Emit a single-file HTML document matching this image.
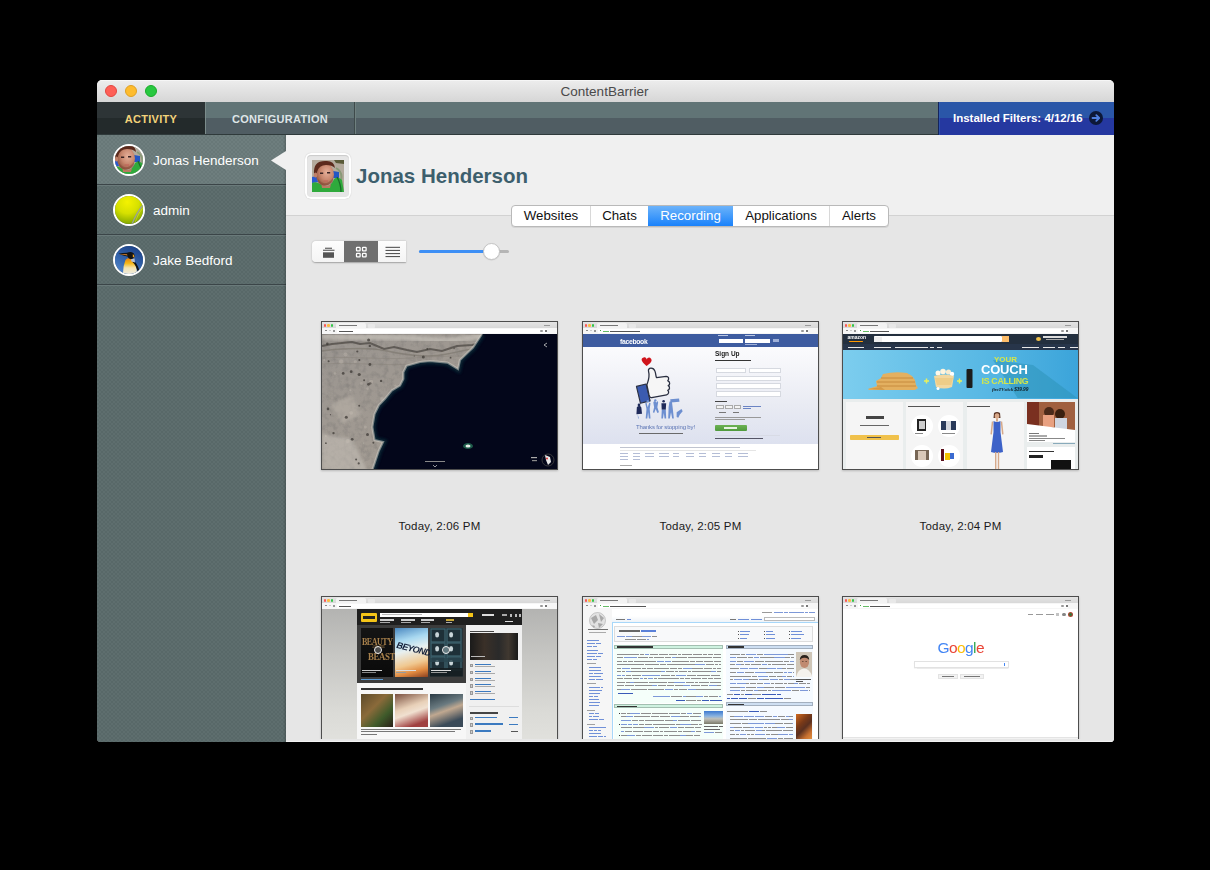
<!DOCTYPE html>
<html><head><meta charset="utf-8">
<style>
*{margin:0;padding:0;box-sizing:border-box}
html,body{width:1210px;height:870px;background:#000;overflow:hidden;font-family:"Liberation Sans",sans-serif}
.abs{position:absolute}
#win{position:absolute;left:97px;top:80px;width:1017px;height:662px;border-radius:5px 5px 4px 4px;overflow:hidden;background:#e6e6e6}
#title{position:absolute;left:0;top:0;width:1017px;height:22px;background:linear-gradient(#ececec,#d6d6d6);border-top:1px solid #f6f6f6}
#title .t{position:absolute;left:-1px;width:1017px;top:3px;text-align:center;font-size:13.5px;color:#4a4a4a}
.tl{position:absolute;top:4px;width:12px;height:12px;border-radius:50%}
#tabs{position:absolute;left:0;top:22px;width:1017px;height:33px;background:linear-gradient(#617476 0,#617476 16px,#505d63 16px,#505d63 32px,#2f3a3b 32px)}
.tab{position:absolute;top:0;height:32px;font-size:11px;font-weight:bold;text-align:center;line-height:35px;letter-spacing:0.3px}
#side{position:absolute;left:0;top:55px;width:189px;height:607px;background-color:#5b6b6b;
 background-image:conic-gradient(#5e6e6e 25%,#586868 0 50%,#5e6e6e 0 75%,#586868 0);background-size:4px 4px}
#side .shadow{position:absolute;right:0;top:0;width:3px;height:607px;background:linear-gradient(90deg,rgba(0,0,0,0),rgba(0,0,0,.18))}
.row{position:absolute;left:0;width:189px;height:50px;border-bottom:1px solid #3b4548;box-shadow:0 1px 0 #6a7a7a}
.row .nm{position:absolute;left:56px;top:18px;font-size:13.5px;color:#fff}
.av{position:absolute;left:16px;top:9px;width:32px;height:32px;border-radius:50%;border:2px solid #fff;overflow:hidden}
.av svg{margin:-2px}
#content{position:absolute;left:189px;top:55px;width:828px;height:607px;background:#e6e6e6;overflow:hidden}
#hdr{position:absolute;left:0;top:0;width:828px;height:81px;background:#f0f0f0;border-bottom:1px solid #d2d2d2}
.seg{position:absolute;top:70px;height:21.5px;background:#fff;border:1px solid #b9b9b9;border-radius:4px;display:flex;font-size:13.3px;color:#111;box-shadow:0 1px 0 rgba(0,0,0,.08)}
.seg div{height:19.5px;line-height:19.5px;text-align:center;border-left:1px solid #d8d8d8}
.seg div:first-child{border-left:none}
.seg .on{background:linear-gradient(#6cb3fa,#1a82fb);color:#fff;border-left:none}

.cap{position:absolute;width:237px;text-align:center;font-size:11.5px;color:#1a1a1a;letter-spacing:0.2px;margin-top:1px}



/*TCSS*/
.a{position:absolute}
.thumb{position:absolute;width:237px;height:149px;border:1px solid #4d4d4d;background:#fff;overflow:hidden;box-shadow:0 1px 2px rgba(0,0,0,.2)}
.chr{position:absolute;left:0;top:0;width:235px;height:11.7px;background:#dcdcdc;border-bottom:.5px solid #bdbdbd}
.chr .ts{position:absolute;left:0;top:0;width:235px;height:6px;background:linear-gradient(#e4e4e4,#d8d8d8)}
.chr .tb{position:absolute;left:14px;top:1px;height:5px;background:#f3f3f3;border-radius:1.5px 1.5px 0 0}
.chr .nt{position:absolute;left:46px;top:2px;width:7px;height:4px;background:#e8e8e8;border-radius:1px}
.chr i{position:absolute;top:2.3px;width:2.4px;height:2.4px;border-radius:50%}
.chr .ab{position:absolute;left:0;top:6px;width:235px;height:5.7px;background:#f6f6f6}
.chr .uf{position:absolute;left:15px;top:6.7px;width:210px;height:4.3px;background:#fff}
.ct{position:absolute;left:0;top:11.7px;width:235px;height:136px;overflow:hidden;filter:blur(.4px)}
/*/TCSS*/</style></head><body>
<div id="win">
  <div id="title">
    <div class="tl" style="left:8px;background:#fe5f57;border:1px solid #e24640"></div>
    <div class="tl" style="left:28px;background:#febc2e;border:1px solid #dfa023"></div>
    <div class="tl" style="left:48px;background:#28c840;border:1px solid #1aab29"></div>
    <div class="t">ContentBarrier</div>
  </div>
  <div id="tabs">
    <div class="tab" style="left:0;width:108px;background:linear-gradient(#2d3436 0,#2d3436 16px,#232a2b 16px);color:#f2d27a">ACTIVITY</div>
    <div class="tab" style="left:108px;width:149px;color:#dfe6e8;border-left:1px solid #7b8c8b">CONFIGURATION</div>
    <div class="abs" style="left:257px;top:0;width:1px;height:32px;background:#3e4a4b"></div>
    <div class="abs" style="left:258px;top:0;width:1px;height:32px;background:#6f807f"></div>
    <div class="abs" style="left:841px;top:0;width:176px;height:33px;background:linear-gradient(#2a56a8 0,#2a56a8 16px,#2538a0 16px)">
      <div class="abs" style="left:0;top:0;width:1px;height:33px;background:#14245c"></div><div class="abs" style="left:1px;top:0;width:1px;height:33px;background:#3560b0;opacity:.6"></div>
      <div class="abs" style="left:15px;top:10px;font-size:11.5px;font-weight:bold;color:#fff;white-space:nowrap">Installed Filters: 4/12/16</div>
      <div class="abs" style="left:151px;top:9px;width:14px;height:14px;border-radius:50%;background:#0d1838">
        <svg class="abs" style="left:0;top:0" width="14" height="14" viewBox="0 0 14 14"><path d="M3.5 7H10M7.3 4.2L10.2 7L7.3 9.8" stroke="#4f7fe0" stroke-width="1.8" fill="none" stroke-linecap="round" stroke-linejoin="round"/></svg>
      </div>
    </div>
  </div>
  <div id="side">
    <div class="row" style="top:0;background:conic-gradient(#6e7e7e 25%,#687878 0 50%,#6e7e7e 0 75%,#687878 0);background-size:4px 4px">
      <div class="av"><svg width="32" height="32" viewBox="0 0 32 32" style="display:block"><defs><radialGradient id="skina" cx=".6" cy=".4" r=".65"><stop offset="0" stop-color="#e6b09a"/><stop offset=".55" stop-color="#c8876e"/><stop offset="1" stop-color="#94553f"/></radialGradient></defs>
<rect width="32" height="32" fill="#b3aa9c"/><path d="M22 0 L32 0 L32 4 L24 3Z" fill="#5a5a38"/>
<path d="M24 8 Q31 12 29 20" stroke="#8a9a78" stroke-width="2" fill="none"/>
<path d="M21 11 L27 12 L27 18 L21 18Z" fill="#2456c4"/><path d="M0 17 L5 16 L6 22 L0 23Z" fill="#2a5ad0"/>
<path d="M0 32 L0 23 Q4 21 8 24 L14 27 Q20 25 22 19 Q26 16 30 20 L32 32Z" fill="#2faa3c"/>
<path d="M25 17 Q29 24 29 32" stroke="#1a6a28" stroke-width="1.3" fill="none"/>
<path d="M9 22 Q13 29 19 24 L18 28 L10 28Z" fill="#b87a62"/>
<ellipse cx="13" cy="14.5" rx="9" ry="11" fill="url(#skina)"/>
<path d="M2 14 Q1 1 13 1 Q22 0 23 8 Q20 5 14 5 Q7 5 5 12 L4 17Z" fill="#5c2a1c"/>
<ellipse cx="3.5" cy="15" rx="1.8" ry="2.5" fill="#c08068"/>
<path d="M8 13.2 h3.2 M15 12.7 h3.2" stroke="#3a2424" stroke-width="1.4"/>
<path d="M6 19 Q13 28 21 18 L21 22 Q13 29 6 23Z" fill="#7a4030" opacity=".4"/>
<path d="M11.5 21 h4.5" stroke="#c06058" stroke-width="1"/>
</svg></div>
      <div class="nm">Jonas Henderson</div>
    </div>
    <div class="row" style="top:50px">
      <div class="av"><svg width="32" height="32" viewBox="0 0 32 32" style="display:block"><defs><radialGradient id="ball" cx=".45" cy=".25" r=".8"><stop offset="0" stop-color="#f4f200"/><stop offset=".45" stop-color="#d6e000"/><stop offset=".8" stop-color="#8fb000"/><stop offset="1" stop-color="#4a6a00"/></radialGradient></defs>
<rect width="32" height="32" fill="url(#ball)"/><path d="M30 11 Q24 18 19 30" stroke="#9aa0a0" stroke-width="1.2" fill="none"/><path d="M31 12 Q25 19 21 31" stroke="#e8f070" stroke-width=".6" fill="none" opacity=".6"/></svg></div>
      <div class="nm">admin</div>
    </div>
    <div class="row" style="top:100px">
      <div class="av"><svg width="32" height="32" viewBox="0 0 32 32" style="display:block"><defs><linearGradient id="pb" x1=".7" y1="0" x2=".2" y2="1"><stop offset="0" stop-color="#1a3e84"/><stop offset=".55" stop-color="#3566ae"/><stop offset="1" stop-color="#5a8ed2"/></linearGradient><linearGradient id="pc" x1="0" y1="0" x2="0" y2="1"><stop offset="0" stop-color="#e8800c"/><stop offset=".3" stop-color="#f6b818"/><stop offset=".55" stop-color="#f4e4b0"/><stop offset="1" stop-color="#eceef2"/></linearGradient></defs>
<rect width="32" height="32" fill="url(#pb)"/>
<path d="M12.5 16 Q14 13.5 17.5 14 Q21 15 23 22 L24.5 32 L10 32 Q9.5 23 12.5 16Z" fill="url(#pc)"/>
<path d="M20 16.5 Q24.5 19 26.5 27 L24.8 28 Q23 21 19.5 18Z" fill="#121212"/>
<path d="M17.5 14 L21.5 14.5 L22 18.5 L18.5 17.5Z" fill="#b4c0d6"/>
<path d="M5.5 9.8 Q10 9 14 8.8 Q16 7.8 19 8.2 Q22 9 21.5 12.5 Q21 15 18 15.2 Q15.5 15 14.5 12.5 Q10 11.5 5.5 9.8Z" fill="#141414"/>
<path d="M6 10 Q10 10.8 14.5 11.6 L14 10.2 Q10 10 6 10Z" fill="#e0862e"/>
<path d="M19.8 10 Q21.8 11.2 21.4 13.6 L19.8 13Z" fill="#f2a21a"/>
</svg></div>
      <div class="nm">Jake Bedford</div>
    </div>
    <div class="shadow"></div>
    <svg class="abs" style="left:174px;top:16.4px" width="15" height="20" viewBox="0 0 15 20"><path d="M15 0L0 9.5L15 19Z" fill="#f0f0f0"/></svg>
  </div>
  <div id="content">
    <div id="hdr"></div>
    <div class="abs" style="left:19px;top:18px;width:46px;height:46px;border-radius:6px;background:#fff;box-shadow:0 0 1px rgba(0,0,0,.25)"></div>
    <div class="abs" style="left:21px;top:20px;width:42px;height:42px;border-radius:4px;background:#e6e6e6;box-shadow:inset 0 1px 1px rgba(0,0,0,.12)"></div>
    <div class="abs" style="left:26px;top:25px;width:32px;height:32px;overflow:hidden"><svg width="32" height="32" viewBox="0 0 32 32" style="display:block"><defs><radialGradient id="skinb" cx=".6" cy=".4" r=".65"><stop offset="0" stop-color="#e6b09a"/><stop offset=".55" stop-color="#c8876e"/><stop offset="1" stop-color="#94553f"/></radialGradient></defs>
<rect width="32" height="32" fill="#b3aa9c"/><path d="M22 0 L32 0 L32 4 L24 3Z" fill="#5a5a38"/>
<path d="M24 8 Q31 12 29 20" stroke="#8a9a78" stroke-width="2" fill="none"/>
<path d="M21 11 L27 12 L27 18 L21 18Z" fill="#2456c4"/><path d="M0 17 L5 16 L6 22 L0 23Z" fill="#2a5ad0"/>
<path d="M0 32 L0 23 Q4 21 8 24 L14 27 Q20 25 22 19 Q26 16 30 20 L32 32Z" fill="#2faa3c"/>
<path d="M25 17 Q29 24 29 32" stroke="#1a6a28" stroke-width="1.3" fill="none"/>
<path d="M9 22 Q13 29 19 24 L18 28 L10 28Z" fill="#b87a62"/>
<ellipse cx="13" cy="14.5" rx="9" ry="11" fill="url(#skinb)"/>
<path d="M2 14 Q1 1 13 1 Q22 0 23 8 Q20 5 14 5 Q7 5 5 12 L4 17Z" fill="#5c2a1c"/>
<ellipse cx="3.5" cy="15" rx="1.8" ry="2.5" fill="#c08068"/>
<path d="M8 13.2 h3.2 M15 12.7 h3.2" stroke="#3a2424" stroke-width="1.4"/>
<path d="M6 19 Q13 28 21 18 L21 22 Q13 29 6 23Z" fill="#7a4030" opacity=".4"/>
<path d="M11.5 21 h4.5" stroke="#c06058" stroke-width="1"/>
</svg></div>
    <div class="abs" style="left:70px;top:28.5px;font-size:20.5px;font-weight:bold;color:#3d5f6d;white-space:nowrap">Jonas Henderson</div>
    <div class="seg" style="left:225px">
      <div style="width:78px">Websites</div>
      <div style="width:58px">Chats</div>
      <div class="on" style="width:85px">Recording</div>
      <div style="width:96px;border-left:none">Applications</div>
      <div style="width:59px">Alerts</div>
    </div>
    <!-- view buttons -->
    <div class="abs" style="left:26px;top:106px;width:94px;height:21px;background:linear-gradient(#fdfdfd,#f4f4f4);border-radius:4px 0 0 4px;box-shadow:0 .5px 1.5px rgba(0,0,0,.3)"></div>
    <div class="abs" style="left:58px;top:106px;width:34px;height:21px;background:#6f6f6f"></div>
    <svg class="abs" style="left:26px;top:106px" width="94" height="21" viewBox="0 0 94 21">
      <rect x="11" y="11.3" width="11" height="5.5" fill="#555"/><rect x="11" y="8.7" width="11.5" height="1.1" fill="#555"/><rect x="13" y="6.7" width="7" height="1.1" fill="#555"/>
      <g fill="none" stroke="#fff" stroke-width="1.3"><rect x="44.5" y="6.3" width="3.6" height="3.6" rx=".6"/><rect x="50.5" y="6.3" width="3.6" height="3.6" rx=".6"/><rect x="44.5" y="12.3" width="3.6" height="3.6" rx=".6"/><rect x="50.5" y="12.3" width="3.6" height="3.6" rx=".6"/></g>
      <g fill="#555"><rect x="73.5" y="5.8" width="14.5" height="1.1"/><rect x="73.5" y="8.9" width="14.5" height="1.1"/><rect x="73.5" y="12" width="14.5" height="1.1"/><rect x="73.5" y="15" width="14.5" height="1.1"/></g>
    </svg>
    <!-- slider -->
    <div class="abs" style="left:133px;top:115px;width:90px;height:3px;border-radius:2px;background:#b5b5b5"></div>
    <div class="abs" style="left:133px;top:115px;width:72px;height:3px;border-radius:2px;background:#3d8ff5"></div>
    <div class="abs" style="left:197px;top:107.5px;width:17px;height:17px;border-radius:50%;background:#fff;border:1px solid #c4c4c4;box-shadow:0 .5px 1px rgba(0,0,0,.12)"></div>

    <!--THUMBS-->
<div class="thumb" style="left:35px;top:186px"><div class="chr"><div class="ts"></div><div class="tb" style="width:30px"></div><div class="nt"></div>
<i style="left:1.8px;background:#fc5753"></i><i style="left:5.2px;background:#fdbc40"></i><i style="left:8.5px;background:#33c748"></i>
<div class="ab"></div><div class="uf"></div>
<div class="a" style="left:16.5px;top:3px;width:18px;height:1px;background:#777"></div>
<div class="a" style="left:2.5px;top:8.3px;width:2px;height:1.2px;background:#888"></div><div class="a" style="left:6.5px;top:8.3px;width:2px;height:1.2px;background:#ccc"></div><div class="a" style="left:10.5px;top:8px;width:2px;height:2px;background:#777;border-radius:50%"></div>
<div class="a" style="left:17px;top:8.5px;width:14px;height:1px;background:#555"></div>
<div class="a" style="left:218px;top:7.8px;width:2.5px;height:2.5px;background:#999;border-radius:50%"></div><div class="a" style="left:222.5px;top:7.8px;width:2.5px;height:2.5px;background:#777"></div>
<div class="a" style="left:222px;top:2.5px;width:6px;height:1px;background:#999"></div></div><div class="ct"><svg class="a" style="left:0;top:0" width="235" height="136" viewBox="0 0 235 136">
<defs><filter id="bl"><feGaussianBlur stdDeviation="0.7"/></filter><filter id="bl2"><feGaussianBlur stdDeviation="1.5"/></filter>
<filter id="tx" x="0" y="0" width="100%" height="100%"><feTurbulence type="fractalNoise" baseFrequency="0.18" numOctaves="4" seed="9" result="n"/><feColorMatrix in="n" values="0 0 0 0 0.2  0 0 0 0 0.19  0 0 0 0 0.18  0 0 0 -2.2 1.25"/></filter>
<clipPath id="lc"><polygon points="0,0 160,0 151,13.5 138,26 136,35 125.5,28.6 108,27 98,28 84.6,31.7 81.3,38.3 81.3,45 78,51.5 69.7,56.5 63,64.8 57,71 52.5,80 50.3,93 52.5,106 61,108 56.8,116.7 50.3,136 0,136"/></clipPath>
<linearGradient id="lg" x1="0" y1="0" x2="1" y2="1"><stop offset="0" stop-color="#9a9590"/><stop offset="0.5" stop-color="#a19a92"/><stop offset="1" stop-color="#aca398"/></linearGradient></defs>
<rect width="235" height="136" fill="#03061a"/>
<polyline points="160,0 151,13.5 138,26 136,35 125.5,28.6 108,27 98,28 84.6,31.7 81.3,38.3 81.3,45 78,51.5 69.7,56.5 63,64.8 57,71 52.5,80 50.3,93 52.5,106 61,108 56.8,116.7 50.3,136" fill="none" stroke="#0f3440" stroke-width="6" opacity=".7" filter="url(#bl2)"/>
<g clip-path="url(#lc)">
<rect width="235" height="136" fill="url(#lg)"/>
<rect width="235" height="136" fill="#000" filter="url(#tx)" opacity=".5"/>
<path d="M0 2 C30 5 60 1 100 5 S140 3 165 2" stroke="#cfcac2" stroke-width="6" fill="none" opacity=".6" filter="url(#bl2)"/>
<path d="M0 12 L10 10 L20 9 L30 8 L38 10 L48 9 L55 12 L62 15 L72 13 L85 16 L95 18 L108 15 L120 17 L135 12 L150 11 L160 9" stroke="#4e4944" stroke-width="2" fill="none" opacity=".75" filter="url(#bl)"/>
<path d="M0 17 C25 14 45 13 65 17 S105 24 125 20 S150 14 158 15" stroke="#7a746c" stroke-width="1.5" fill="none" opacity=".6" filter="url(#bl)"/>
<path d="M0 24 C30 22 60 26 90 24 S130 22 150 22 M0 30 C30 28 60 32 90 30" stroke="#8a847c" stroke-width="1" fill="none" opacity=".5"/>
<path d="M0 100 L30 105 L45 136 L0 136Z" fill="#c9c4bc" opacity=".5" filter="url(#bl2)"/>
<path d="M8 70 L30 62 L40 80 L20 90Z" fill="#bdb6ac" opacity=".5" filter="url(#bl2)"/>
<g fill="#3e3a36" opacity=".75"><circle cx="37.2" cy="71.7" r="1.0"/><circle cx="91.4" cy="82.1" r="0.7"/><circle cx="3.9" cy="109.2" r="0.9"/><circle cx="36.7" cy="129.4" r="1.1"/><circle cx="125.8" cy="63.0" r="1.2"/><circle cx="24.3" cy="83.3" r="1.5"/><circle cx="79.4" cy="96.9" r="1.3"/><circle cx="11.5" cy="99.1" r="1.2"/><circle cx="46.6" cy="6.0" r="1.5"/><circle cx="72.0" cy="94.0" r="1.5"/><circle cx="107.7" cy="119.9" r="1.0"/><circle cx="120.5" cy="58.9" r="1.5"/><circle cx="132.1" cy="14.5" r="0.7"/><circle cx="34.1" cy="125.6" r="1.0"/><circle cx="94.7" cy="40.5" r="1.1"/><circle cx="59.1" cy="46.9" r="1.2"/><circle cx="88.5" cy="117.7" r="1.3"/><circle cx="139.5" cy="111.6" r="1.6"/><circle cx="101.3" cy="22.9" r="1.5"/><circle cx="144.8" cy="117.8" r="1.2"/><circle cx="107.6" cy="29.0" r="1.4"/><circle cx="86.9" cy="38.5" r="0.7"/><circle cx="128.4" cy="128.7" r="0.7"/><circle cx="120.5" cy="54.5" r="0.8"/><circle cx="45.5" cy="100.4" r="1.5"/><circle cx="8.5" cy="80.7" r="0.6"/><circle cx="108.3" cy="44.4" r="1.5"/><circle cx="147.1" cy="66.7" r="1.6"/><circle cx="47.8" cy="11.9" r="1.2"/><circle cx="6.6" cy="27.3" r="1.0"/><circle cx="92.3" cy="22.0" r="0.6"/><circle cx="130.4" cy="42.2" r="1.6"/><circle cx="134.7" cy="50.4" r="1.1"/><circle cx="79.0" cy="84.4" r="1.2"/><circle cx="84.8" cy="81.4" r="1.5"/><circle cx="77.0" cy="57.2" r="1.3"/><circle cx="37.2" cy="40.5" r="1.6"/><circle cx="79.1" cy="72.2" r="0.6"/><circle cx="63.5" cy="76.2" r="0.6"/><circle cx="93.1" cy="82.9" r="0.7"/><circle cx="94.8" cy="61.7" r="1.3"/><circle cx="54.2" cy="92.5" r="1.3"/><circle cx="5.3" cy="9.8" r="1.3"/><circle cx="144.6" cy="34.1" r="1.1"/><circle cx="89.7" cy="43.0" r="1.0"/><circle cx="48.3" cy="49.3" r="1.2"/><circle cx="46.5" cy="50.3" r="1.4"/><circle cx="6.0" cy="74.9" r="1.3"/><circle cx="47.9" cy="30.5" r="1.4"/><circle cx="37.3" cy="26.0" r="1.0"/><circle cx="105.3" cy="15.0" r="0.9"/><circle cx="51.4" cy="108.7" r="1.0"/><circle cx="128.6" cy="23.7" r="0.9"/><circle cx="98.2" cy="115.3" r="1.1"/><circle cx="35.3" cy="17.5" r="1.1"/><circle cx="30.2" cy="105.3" r="1.4"/><circle cx="29.2" cy="37.7" r="1.4"/><circle cx="97.0" cy="105.2" r="0.9"/><circle cx="21.2" cy="39.4" r="1.4"/><circle cx="42.1" cy="46.3" r="1.0"/></g>
<g fill="#cfc8bc" opacity=".3"><circle cx="59.9" cy="65.0" r="2.1"/><circle cx="23.5" cy="20.5" r="2.1"/><circle cx="123.4" cy="128.6" r="1.4"/><circle cx="133.1" cy="122.0" r="1.1"/><circle cx="104.9" cy="112.0" r="1.7"/><circle cx="73.6" cy="51.8" r="1.3"/><circle cx="33.4" cy="27.5" r="1.6"/><circle cx="41.6" cy="109.1" r="0.9"/><circle cx="126.7" cy="96.3" r="2.1"/><circle cx="125.7" cy="119.0" r="1.6"/><circle cx="3.8" cy="102.0" r="1.0"/><circle cx="43.4" cy="92.9" r="1.5"/><circle cx="59.1" cy="123.3" r="1.7"/><circle cx="49.1" cy="47.8" r="2.0"/><circle cx="67.9" cy="106.1" r="1.3"/><circle cx="29.2" cy="78.8" r="1.9"/><circle cx="25.6" cy="107.1" r="2.1"/><circle cx="113.2" cy="110.6" r="0.8"/><circle cx="88.7" cy="114.9" r="0.9"/><circle cx="39.5" cy="49.5" r="1.5"/><circle cx="60.4" cy="72.0" r="1.9"/><circle cx="2.2" cy="26.0" r="1.0"/><circle cx="19.2" cy="27.5" r="2.2"/><circle cx="119.9" cy="29.5" r="1.5"/><circle cx="45.6" cy="54.6" r="1.3"/><circle cx="91.3" cy="84.5" r="1.3"/><circle cx="28.4" cy="56.2" r="1.0"/><circle cx="78.7" cy="98.8" r="1.3"/><circle cx="13.0" cy="39.6" r="1.3"/><circle cx="85.4" cy="106.1" r="1.3"/></g>
</g>
<polyline points="160,0 151,13.5 138,26 136,35 125.5,28.6 108,27 98,28 84.6,31.7 81.3,38.3 81.3,45 78,51.5 69.7,56.5 63,64.8 57,71 52.5,80 50.3,93 52.5,106 61,108 56.8,116.7 50.3,136" fill="none" stroke="#d0ccc4" stroke-width="2.2" opacity=".55" filter="url(#bl)"/>
<ellipse cx="146" cy="112" rx="5" ry="3" fill="#1d5a4a" filter="url(#bl)"/><ellipse cx="146" cy="112" rx="2.5" ry="1.5" fill="#e8ece8"/>
<path d="M225 9 L222 11 L225 13" stroke="#ccc" stroke-width=".8" fill="none"/>
<rect x="103" y="127" width="20" height="1" fill="#888"/><path d="M111 131 L113 133 L115 131" stroke="#bbb" stroke-width=".8" fill="none"/>
<rect x="209" y="123" width="6" height="1.2" fill="#aaa"/><rect x="210" y="126" width="5" height="1.2" fill="#888"/>
<circle cx="226" cy="126" r="6" fill="none" stroke="#444" stroke-width=".8"/><path d="M223 121 L228 123 L229 128 L226 131 L224 126Z" fill="#e8e8e8"/><circle cx="225" cy="124.5" r="1" fill="#d33"/>
</svg></div></div>
<div class="thumb" style="left:296px;top:186px"><div class="chr"><div class="ts"></div><div class="tb" style="width:30px"></div><div class="nt"></div>
<i style="left:1.8px;background:#fc5753"></i><i style="left:5.2px;background:#fdbc40"></i><i style="left:8.5px;background:#33c748"></i>
<div class="ab"></div><div class="uf"></div>
<div class="a" style="left:16.5px;top:3px;width:18px;height:1px;background:#777"></div>
<div class="a" style="left:2.5px;top:8.3px;width:2px;height:1.2px;background:#888"></div><div class="a" style="left:6.5px;top:8.3px;width:2px;height:1.2px;background:#ccc"></div><div class="a" style="left:10.5px;top:8px;width:2px;height:2px;background:#777;border-radius:50%"></div>
<div class="a" style="left:17px;top:8.3px;width:1px;height:1.2px;background:#4a4"></div><div class="a" style="left:19.5px;top:8.5px;width:6px;height:1px;background:#6b6"></div><div class="a" style="left:26.5px;top:8.5px;width:30px;height:1px;background:#555"></div>
<div class="a" style="left:218px;top:7.8px;width:2.5px;height:2.5px;background:#999;border-radius:50%"></div><div class="a" style="left:222.5px;top:7.8px;width:2.5px;height:2.5px;background:#777"></div>
<div class="a" style="left:222px;top:2.5px;width:6px;height:1px;background:#999"></div></div><div class="ct"><div class="a" style="left:0px;top:0px;width:235px;height:14.3px;background:#3e5ca0;"></div><div class="a" style="left:37px;top:4px;font:bold 6.8px/7px 'Liberation Sans',sans-serif;color:#fff;letter-spacing:-.3px">facebook</div><div class="a" style="left:135.5px;top:5.5px;width:24px;height:3.5px;background:#fff;"></div><div class="a" style="left:162px;top:5.5px;width:24.5px;height:3.5px;background:#fff;"></div><div class="a" style="left:190px;top:5.7px;width:6px;height:2.5px;background:#9fb0d8;"></div><div class="a" style="left:135px;top:1.5px;width:10px;height:1px;background:#b9c6e3;"></div><div class="a" style="left:162px;top:1.5px;width:10px;height:1px;background:#b9c6e3;"></div><div class="a" style="left:162px;top:10.5px;width:12px;height:0.8px;background:#9fb0d8;"></div><div class="a" style="left:0px;top:13.5px;width:235px;height:97px;background:linear-gradient(#fbfbfd,#e9ebf3 60%,#dde1ef);"></div><div class="a" style="left:0px;top:110.5px;width:235px;height:25.5px;background:#fff;"></div><svg class="a" style="left:47px;top:17px" width="60" height="70" viewBox="0 0 746 870">
<path d="M205 185 C150 140 120 95 170 80 C195 72 205 95 208 105 C215 85 240 70 262 95 C285 125 245 160 205 185Z" fill="#d0141c"/>
<path d="M80 440 L200 410 L250 620 L130 650Z" fill="#3b5bb0" stroke="#2a2f40" stroke-width="14" stroke-linejoin="round"/>
<path d="M210 420 C230 360 250 320 230 250 C220 205 290 195 310 250 C325 290 320 320 330 330 L450 315 C480 315 490 345 470 370 C500 380 500 420 475 430 C500 445 495 480 470 490 C490 505 480 540 455 545 L270 580 C250 585 240 560 235 540Z" fill="#f6f6f6" stroke="#2a2f40" stroke-width="16" stroke-linejoin="round"/>
<g fill="#6d8fd0">
<path d="M190 650 L205 640 L220 700 L240 640 L255 650 L245 720 L255 840 L235 840 L225 760 L215 840 L195 840 L205 720Z"/>
<circle cx="222" cy="625" r="16"/>
<path d="M290 640 L300 620 L330 640 L345 620 L350 640 L340 700 L360 760 L340 770 L320 720 L300 770 L285 760 L300 700Z"/>
<circle cx="315" cy="615" r="15"/>
<path d="M490 630 L520 620 L530 700 L545 840 L525 840 L510 760 L495 840 L475 840 L480 700Z"/>
<path d="M500 600 L610 590 L615 630 L505 640Z"/>
<path d="M580 760 L640 720 L655 750 L620 790 L600 830 L580 820Z"/>
</g>
<g fill="#1f2a5a">
<path d="M85 700 C100 680 130 680 140 700 L150 780 L80 785Z"/><circle cx="112" cy="670" r="17"/>
<path d="M390 650 L450 650 L445 730 L395 730Z"/><circle cx="418" cy="625" r="16"/>
</g>
<g fill="#6d8fd0"><path d="M395 730 L445 730 L450 840 L430 840 L420 770 L410 840 L390 840Z"/><path d="M95 785 L110 840 L100 840Z"/></g>
</svg><div class="a" style="left:53px;top:90.5px;font:6px/6px 'Liberation Sans',sans-serif;color:#5b74b4;white-space:nowrap;letter-spacing:-.15px">Thanks for stopping by!</div><div class="a" style="left:56px;top:99px;width:44px;height:1.3px;background:#6a6a6a;"></div><div class="a" style="left:132px;top:17.5px;font:bold 6.5px/6.5px 'Liberation Sans',sans-serif;color:#222;white-space:nowrap">Sign Up</div><div class="a" style="left:132px;top:26.5px;width:36px;height:1.3px;background:#333;"></div><div class="a" style="left:133px;top:34px;width:30px;height:5.6px;background:#fff;border:.5px solid #d6d9e0"></div><div class="a" style="left:166px;top:34px;width:31.5px;height:5.6px;background:#fff;border:.5px solid #d6d9e0"></div><div class="a" style="left:133px;top:42px;width:64.5px;height:5.6px;background:#fff;border:.5px solid #d6d9e0"></div><div class="a" style="left:133px;top:49.7px;width:64.5px;height:5.6px;background:#fff;border:.5px solid #d6d9e0"></div><div class="a" style="left:133px;top:57.7px;width:64.5px;height:5.6px;background:#fff;border:.5px solid #d6d9e0"></div><div class="a" style="left:132px;top:67px;width:12px;height:1.3px;background:#444;"></div><div class="a" style="left:133px;top:71.5px;width:8px;height:3.5px;background:#f3f3f3;border:.5px solid #aaa"></div><div class="a" style="left:142px;top:71.5px;width:7.5px;height:3.5px;background:#f3f3f3;border:.5px solid #aaa"></div><div class="a" style="left:150.5px;top:71.5px;width:7.5px;height:3.5px;background:#f3f3f3;border:.5px solid #aaa"></div><div class="a" style="left:160px;top:72px;width:18px;height:1px;background:#6b84c4;"></div><div class="a" style="left:160px;top:74px;width:8px;height:1px;background:#6b84c4;"></div><div class="a" style="left:136px;top:78.5px;width:7px;height:1px;background:#777;"></div><div class="a" style="left:150px;top:78.5px;width:6px;height:1px;background:#777;"></div><div class="a" style="left:132px;top:83.5px;width:46px;height:0.9px;background:#999;"></div><div class="a" style="left:132px;top:85.7px;width:30px;height:0.9px;background:#999;"></div><div class="a" style="left:132px;top:91.4px;width:32px;height:6.4px;background:linear-gradient(#6db254,#4f9a3c);border-radius:1px"></div><div class="a" style="left:141px;top:93.8px;width:13px;height:1.3px;background:#e8f3e2;"></div><div class="a" style="left:132px;top:101.5px;width:65px;height:0.6px;background:#d8dbe5;"></div><div class="a" style="left:132px;top:104.5px;width:48px;height:1px;background:#556;"></div><div class="a" style="left:37px;top:113.5px;width:120px;height:0.9px;background:#c0c4d0;"></div><div class="a" style="left:37px;top:116px;width:136px;height:0.5px;background:#e5e5e5;"></div><div class="a" style="left:37px;top:119.5px;width:8px;height:0.9px;background:#b4bdd6;"></div><div class="a" style="left:50px;top:119.5px;width:7px;height:0.9px;background:#b4bdd6;"></div><div class="a" style="left:62px;top:119.5px;width:9px;height:0.9px;background:#b4bdd6;"></div><div class="a" style="left:76px;top:119.5px;width:10px;height:0.9px;background:#b4bdd6;"></div><div class="a" style="left:90px;top:119.5px;width:6px;height:0.9px;background:#b4bdd6;"></div><div class="a" style="left:103px;top:119.5px;width:8px;height:0.9px;background:#b4bdd6;"></div><div class="a" style="left:116px;top:119.5px;width:7px;height:0.9px;background:#b4bdd6;"></div><div class="a" style="left:129px;top:119.5px;width:8px;height:0.9px;background:#b4bdd6;"></div><div class="a" style="left:142px;top:119.5px;width:7px;height:0.9px;background:#b4bdd6;"></div><div class="a" style="left:155px;top:119.5px;width:10px;height:0.9px;background:#b4bdd6;"></div><div class="a" style="left:37px;top:122.6px;width:8px;height:0.9px;background:#b4bdd6;"></div><div class="a" style="left:50px;top:122.6px;width:7px;height:0.9px;background:#b4bdd6;"></div><div class="a" style="left:62px;top:122.6px;width:9px;height:0.9px;background:#b4bdd6;"></div><div class="a" style="left:76px;top:122.6px;width:10px;height:0.9px;background:#b4bdd6;"></div><div class="a" style="left:90px;top:122.6px;width:6px;height:0.9px;background:#b4bdd6;"></div><div class="a" style="left:103px;top:122.6px;width:8px;height:0.9px;background:#b4bdd6;"></div><div class="a" style="left:116px;top:122.6px;width:7px;height:0.9px;background:#b4bdd6;"></div><div class="a" style="left:129px;top:122.6px;width:8px;height:0.9px;background:#b4bdd6;"></div><div class="a" style="left:142px;top:122.6px;width:7px;height:0.9px;background:#b4bdd6;"></div><div class="a" style="left:155px;top:122.6px;width:10px;height:0.9px;background:#b4bdd6;"></div><div class="a" style="left:37px;top:125.7px;width:8px;height:0.9px;background:#b4bdd6;"></div><div class="a" style="left:50px;top:125.7px;width:7px;height:0.9px;background:#b4bdd6;"></div><div class="a" style="left:37px;top:131.8px;width:12px;height:0.8px;background:#aaa;"></div></div></div>
<div class="thumb" style="left:556px;top:186px"><div class="chr"><div class="ts"></div><div class="tb" style="width:30px"></div><div class="nt"></div>
<i style="left:1.8px;background:#fc5753"></i><i style="left:5.2px;background:#fdbc40"></i><i style="left:8.5px;background:#33c748"></i>
<div class="ab"></div><div class="uf"></div>
<div class="a" style="left:16.5px;top:3px;width:18px;height:1px;background:#777"></div>
<div class="a" style="left:2.5px;top:8.3px;width:2px;height:1.2px;background:#888"></div><div class="a" style="left:6.5px;top:8.3px;width:2px;height:1.2px;background:#ccc"></div><div class="a" style="left:10.5px;top:8px;width:2px;height:2px;background:#777;border-radius:50%"></div>
<div class="a" style="left:17px;top:8.3px;width:1px;height:1.2px;background:#4a4"></div><div class="a" style="left:19.5px;top:8.5px;width:6px;height:1px;background:#6b6"></div><div class="a" style="left:26.5px;top:8.5px;width:19px;height:1px;background:#555"></div>
<div class="a" style="left:218px;top:7.8px;width:2.5px;height:2.5px;background:#999;border-radius:50%"></div><div class="a" style="left:222.5px;top:7.8px;width:2.5px;height:2.5px;background:#777"></div>
<div class="a" style="left:222px;top:2.5px;width:6px;height:1px;background:#999"></div></div><div class="ct"><div class="a" style="left:0px;top:0px;width:235px;height:16.3px;background:#232f3e;"></div><div class="a" style="left:0px;top:10px;width:235px;height:6.3px;background:#27354a;"></div><div class="a" style="left:4.5px;top:1.8px;font:bold 5px/5px 'Liberation Sans',sans-serif;color:#fff">amazon</div><div class="a" style="left:6px;top:7.5px;width:14px;height:0.8px;background:#f90;border-radius:1px"></div><div class="a" style="left:31px;top:2.7px;width:127.5px;height:5.5px;background:#fff;border-radius:.8px"></div><div class="a" style="left:158.5px;top:2.7px;width:7.5px;height:5.5px;background:#febd69;"></div><div class="a" style="left:30.5px;top:2.9px;width:8px;height:5px;background:#eee;"></div><div class="a" style="left:193px;top:3px;width:5px;height:4px;background:#f0c14b;border-radius:50%"></div><div class="a" style="left:200px;top:2.5px;width:24px;height:1.6px;background:#ddd;"></div><div class="a" style="left:203px;top:5.5px;width:18px;height:0.9px;background:#aaa;"></div><div class="a" style="left:5px;top:13.5px;width:16px;height:1.2px;background:#e8e8e8;"></div><div class="a" style="left:31px;top:13.5px;width:17px;height:1.2px;background:#e8e8e8;"></div><div class="a" style="left:52px;top:13.5px;width:13px;height:1.2px;background:#e8e8e8;"></div><div class="a" style="left:65px;top:13.5px;width:20px;height:1.2px;background:#e8e8e8;"></div><div class="a" style="left:87px;top:13.5px;width:4px;height:1.2px;background:#e8e8e8;"></div><div class="a" style="left:94px;top:13.5px;width:5px;height:1.2px;background:#e8e8e8;"></div><div class="a" style="left:179px;top:13.5px;width:17px;height:1.2px;background:#e8e8e8;"></div><div class="a" style="left:200px;top:13.5px;width:12px;height:1.2px;background:#e8e8e8;"></div><div class="a" style="left:215px;top:13.5px;width:7px;height:1.2px;background:#e8e8e8;"></div><div class="a" style="left:227px;top:13.5px;width:12px;height:1.2px;background:#e8e8e8;"></div><div class="a" style="left:0px;top:16.3px;width:235px;height:49.2px;background:linear-gradient(90deg,#7ccdee,#58b8e4 60%,#3ba4da);"></div><svg class="a" style="left:0;top:16.3px" width="235" height="48.5"><polygon points="150,10 190,15 235,48.5 175,48.5" fill="#2d94b8" opacity=".55"/></svg><svg class="a" style="left:22px;top:34.8px" width="115" height="24" viewBox="0 0 115 24"><path d="M3 21 L12 18 L11 13 L16 10 L18 6 Q30 3 42 5 L47 8 L50 12 L51 17 L53 20 L50 22 L4 22Z" fill="#e3b060"/><path d="M16 10 L48 10 M12 14 L50 14 M12 18 L51 18" stroke="#c4893a" stroke-width=".9"/><path d="M3 21 L16 19 L20 22Z" fill="#d49a48"/><path d="M59 13 h5 M61.5 10.5 v5" stroke="#e9f05a" stroke-width="1.5"/><circle cx="73" cy="5" r="2.5" fill="#fff8e8"/><circle cx="78" cy="3.5" r="2.8" fill="#fff4dc"/><circle cx="83.5" cy="4" r="2.6" fill="#f8ecd0"/><circle cx="87" cy="6" r="2.2" fill="#fff"/><path d="M69 8 Q79 5 89 8 L87 19 Q79 22 71 19Z" fill="#f2d8a0"/><path d="M70 10 L88 10 L86 17 L72 17Z" fill="#e9c270" opacity=".5"/><circle cx="73" cy="20.5" r="1.5" fill="#fff"/><path d="M92 13 h5 M94.5 10.5 v5" stroke="#e9f05a" stroke-width="1.5"/><rect x="101.5" y="1" width="6" height="19" rx="1" fill="#1c1c1c"/></svg><div class="a" style="left:151px;top:22px;font:bold 8px/8px 'Liberation Sans',sans-serif;color:#d4e64a">YOUR</div><div class="a" style="left:138px;top:30.5px;font:bold 13px/11.5px 'Liberation Sans',sans-serif;color:#fff;letter-spacing:-.2px">COUCH</div><div class="a" style="left:138.5px;top:43.5px;font:bold 8.8px/8.2px 'Liberation Sans',sans-serif;color:#d4e64a;letter-spacing:-.3px;white-space:nowrap">IS CALLING</div><div class="a" style="left:149px;top:53.3px;font:italic bold 4.8px/5px 'Liberation Serif',serif;color:#102028;white-space:nowrap;letter-spacing:-.1px">fireTVstick <span style="font-family:Liberation Sans">$39.99</span></div><div class="a" style="left:0px;top:65.5px;width:235px;height:70.5px;background:#e9eded;"></div><div class="a" style="left:2.5px;top:68px;width:57.5px;height:68px;background:#f5f5f5;"></div><div class="a" style="left:63.3px;top:68px;width:57px;height:68px;background:#f5f5f5;"></div><div class="a" style="left:123.7px;top:68px;width:57px;height:68px;background:#f5f5f5;"></div><div class="a" style="left:183.8px;top:68px;width:48.5px;height:40.7px;background:#fff;"></div><div class="a" style="left:183.8px;top:113px;width:48.5px;height:23px;background:#fff;"></div><div class="a" style="left:22.5px;top:82.8px;width:18.5px;height:2.2px;background:#444;"></div><div class="a" style="left:17px;top:91.3px;width:29px;height:0.9px;background:#666;"></div><div class="a" style="left:7.2px;top:101.3px;width:48.4px;height:5.3px;background:#f0c14b;border-radius:.8px"></div><div class="a" style="left:24px;top:103.5px;width:14px;height:0.8px;background:#555;"></div><div class="a" style="left:65.3px;top:72.3px;width:31.5px;height:1.2px;background:#555;"></div><div class="a" style="left:67.8px;top:80.9px;width:22px;height:22px;background:#fff;border-radius:50%"></div><div class="a" style="left:94.8px;top:80.9px;width:22px;height:22px;background:#fff;border-radius:50%"></div><div class="a" style="left:67.8px;top:111.4px;width:22px;height:22px;background:#fff;border-radius:50%"></div><div class="a" style="left:94.8px;top:111.4px;width:22px;height:22px;background:#fff;border-radius:50%"></div><div class="a" style="left:74px;top:85.5px;width:9px;height:12px;background:#222;"></div><div class="a" style="left:75.5px;top:87px;width:6px;height:8px;background:#cfcfcf;"></div><div class="a" style="left:98px;top:87.5px;width:15px;height:9px;background:#2a3a5a;"></div><div class="a" style="left:103px;top:86px;width:5px;height:11px;background:#fff;opacity:.8"></div><div class="a" style="left:72px;top:116px;width:14px;height:10px;background:#776655;"></div><div class="a" style="left:75px;top:117px;width:8px;height:9px;background:#d9c8b8;"></div><div class="a" style="left:98px;top:115px;width:3px;height:12px;background:#5a0e1a;"></div><div class="a" style="left:102px;top:119px;width:5px;height:7px;background:#f2c200;"></div><div class="a" style="left:107px;top:119px;width:4px;height:6px;background:#3a6ad0;"></div><div class="a" style="left:72px;top:99px;width:8px;height:0.8px;background:#888;"></div><div class="a" style="left:99px;top:99px;width:13px;height:0.8px;background:#888;"></div><div class="a" style="left:123.8px;top:72.3px;width:23px;height:1.2px;background:#555;"></div><svg class="a" style="left:144px;top:78px" width="20" height="58" viewBox="0 0 20 58"><path d="M7 1 Q10 -1 13 1 L13.5 6 L6.5 6Z" fill="#5a3424"/><ellipse cx="10" cy="4" rx="2.3" ry="2.8" fill="#d9a888"/><rect x="9" y="6.5" width="2" height="3" fill="#d6a98a"/><path d="M6.5 9 Q10 11 13.5 9 L13.5 20 L16 40 Q10 42 4 40 L6.5 20Z" fill="#3d62c8"/><rect x="8" y="40" width="1.4" height="17" fill="#d6a98a"/><rect x="10.8" y="40" width="1.4" height="17" fill="#d6a98a"/><rect x="4.8" y="9.5" width="1.5" height="13" fill="#d6a98a" transform="rotate(6 5.5 9.5)"/><rect x="13.7" y="9.5" width="1.5" height="13" fill="#d6a98a" transform="rotate(-6 14.5 9.5)"/></svg><svg class="a" style="left:183.8px;top:68px" width="48.5" height="28"><rect width="48.5" height="28" fill="#a06040"/><rect x="0" y="0" width="12" height="28" fill="#7a3020"/><circle cx="22" cy="10" r="5" fill="#4a2a1a"/><rect x="16" y="13" width="11" height="12" fill="#e8a080"/><circle cx="33" cy="12" r="5" fill="#3a2010"/><rect x="28" y="16" width="12" height="12" fill="#cfd5e0"/><polygon points="0,22 48.5,28 0,28" fill="#fff"/></svg><div class="a" style="left:186px;top:99px;width:10px;height:0.9px;background:#777;"></div><div class="a" style="left:186px;top:101.5px;width:18px;height:2px;background:#aaa;"></div><div class="a" style="left:186px;top:104.5px;width:36px;height:0.9px;background:#888;"></div><div class="a" style="left:186px;top:106.5px;width:16px;height:0.9px;background:#888;"></div><div class="a" style="left:210px;top:109.5px;width:22px;height:0.6px;background:#8ab;"></div><div class="a" style="left:186px;top:117px;width:25px;height:1.2px;background:#333;"></div><div class="a" style="left:186px;top:121.8px;width:14px;height:2.3px;background:#222;"></div><div class="a" style="left:208px;top:126.6px;width:20px;height:9.4px;background:#111;"></div></div></div>
<div class="thumb" style="left:35px;top:461px"><div class="chr"><div class="ts"></div><div class="tb" style="width:30px"></div><div class="nt"></div>
<i style="left:1.8px;background:#fc5753"></i><i style="left:5.2px;background:#fdbc40"></i><i style="left:8.5px;background:#33c748"></i>
<div class="ab"></div><div class="uf"></div>
<div class="a" style="left:16.5px;top:3px;width:18px;height:1px;background:#777"></div>
<div class="a" style="left:2.5px;top:8.3px;width:2px;height:1.2px;background:#888"></div><div class="a" style="left:6.5px;top:8.3px;width:2px;height:1.2px;background:#ccc"></div><div class="a" style="left:10.5px;top:8px;width:2px;height:2px;background:#777;border-radius:50%"></div>
<div class="a" style="left:17px;top:8.5px;width:12px;height:1px;background:#555"></div>
<div class="a" style="left:218px;top:7.8px;width:2.5px;height:2.5px;background:#999;border-radius:50%"></div><div class="a" style="left:222.5px;top:7.8px;width:2.5px;height:2.5px;background:#777"></div>
<div class="a" style="left:222px;top:2.5px;width:6px;height:1px;background:#999"></div></div><div class="ct"><div class="a" style="left:0;top:.3px;width:235px;height:136px"><div class="a" style="left:0px;top:-1px;width:235px;height:137px;background:linear-gradient(#b3b3b1,#c6c6c3 35%,#dadad6 75%,#e2e2de);"></div><div class="a" style="left:35.3px;top:0px;width:164.3px;height:16px;background:#1f1f1f;"></div><div class="a" style="left:39px;top:4.3px;width:16px;height:8.6px;background:#f5c518;border-radius:1px"></div><div class="a" style="left:41px;top:7px;width:12px;height:3px;background:#222;"></div><div class="a" style="left:57.8px;top:3.7px;width:88px;height:4.3px;background:#fff;"></div><div class="a" style="left:145.9px;top:3.7px;width:4.8px;height:4.3px;background:#f5c518;"></div><div class="a" style="left:60px;top:5.5px;width:40px;height:0.8px;background:#bbb;"></div><div class="a" style="left:160px;top:5px;width:12px;height:2.5px;background:#ddd;"></div><div class="a" style="left:180px;top:5px;width:5px;height:2px;background:#aaa;"></div><div class="a" style="left:188px;top:5px;width:2px;height:3px;background:#bbb;"></div><div class="a" style="left:193px;top:5px;width:2px;height:3px;background:#bbb;"></div><div class="a" style="left:197px;top:5px;width:2px;height:3px;background:#bbb;"></div><div class="a" style="left:58px;top:10.5px;width:14px;height:1.3px;background:#cfcfcf;"></div><div class="a" style="left:58px;top:12.6px;width:9.799999999999999px;height:1px;background:#aaa;"></div><div class="a" style="left:79px;top:10.5px;width:14px;height:1.3px;background:#cfcfcf;"></div><div class="a" style="left:79px;top:12.6px;width:9.799999999999999px;height:1px;background:#aaa;"></div><div class="a" style="left:99px;top:10.5px;width:13px;height:1.3px;background:#cfcfcf;"></div><div class="a" style="left:99px;top:12.6px;width:9.1px;height:1px;background:#aaa;"></div><div class="a" style="left:124px;top:10.5px;width:8px;height:1.3px;background:#c8a83a;"></div><div class="a" style="left:124px;top:12.6px;width:5.6px;height:1px;background:#aaa;"></div><div class="a" style="left:183px;top:12px;width:8px;height:1.2px;background:#ddd;"></div><div class="a" style="left:35.3px;top:16px;width:108.5px;height:58px;background:#3c3c3c;"></div><div class="a" style="left:143.8px;top:16px;width:55.8px;height:126px;background:#f0f0f0;"></div><div class="a" style="left:39px;top:19.3px;width:32.4px;height:48.4px;background:linear-gradient(#141414,#0a0a0a);"></div><div class="a" style="left:40px;top:28px;font:bold 10px/10px 'Liberation Serif',serif;color:#a8814c;letter-spacing:-.6px;transform:scaleX(.8);transform-origin:0 0">BEAUTY</div><div class="a" style="left:50px;top:37px;font:3px/3px 'Liberation Serif',serif;color:#a8814c">AND THE</div><div class="a" style="left:46px;top:42px;font:bold 11px/11px 'Liberation Serif',serif;color:#a8814c;letter-spacing:-.5px;transform:scaleX(.8);transform-origin:0 0">BEAST</div><div class="a" style="left:52px;top:37px;width:8px;height:8px;background:rgba(255,255,255,.25);border-radius:50%;border:.8px solid #eee"></div><div class="a" style="left:40px;top:61px;width:20px;height:1px;background:#ccc;"></div><div class="a" style="left:40px;top:63.5px;width:14px;height:0.8px;background:#888;"></div><div class="a" style="left:73.2px;top:19.3px;width:32.4px;height:48.4px;background:linear-gradient(165deg,#4a88c0,#a8d8f0 25%,#e8f0f0 45%,#f0c890 70%,#e08a40 85%,#8a4020);"></div><div class="a" style="left:73.5px;top:36px;font:bold italic 9px/9px 'Liberation Sans',sans-serif;color:#14203a;transform:rotate(14deg);letter-spacing:-.6px">BEYOND</div><div class="a" style="left:74px;top:61px;width:20px;height:1px;background:#ddd;"></div><div class="a" style="left:74px;top:63.5px;width:10px;height:0.8px;background:#999;"></div><svg class="a" style="left:107.9px;top:19.3px" width="32.7" height="48.4"><rect width="32.7" height="48.4" fill="#1e3038"/><g fill="none" stroke="#3e6470" stroke-width="1.2"><rect x="1" y="1" width="14" height="13"/><rect x="17" y="1" width="14" height="13"/><rect x="1" y="15" width="14" height="13"/><rect x="17" y="15" width="14" height="13"/><rect x="1" y="29" width="14" height="13"/><rect x="17" y="29" width="14" height="13"/></g><ellipse cx="7.1" cy="6.7" rx="2" ry="2.7" fill="#c8d4d8"/><ellipse cx="7.1" cy="20.7" rx="2" ry="2.7" fill="#c8d4d8"/><ellipse cx="7.1" cy="34.7" rx="2" ry="2.7" fill="#c8d4d8"/><ellipse cx="21.1" cy="6.7" rx="2" ry="2.7" fill="#c8d4d8"/><ellipse cx="21.1" cy="20.7" rx="2" ry="2.7" fill="#c8d4d8"/><ellipse cx="21.1" cy="34.7" rx="2" ry="2.7" fill="#c8d4d8"/><rect x="0" y="30" width="32.7" height="4" fill="#2a4650" opacity=".8"/><rect x="0" y="40" width="32.7" height="8.4" fill="#151c20" opacity=".85"/></svg><div class="a" style="left:120px;top:37px;width:8px;height:8px;background:rgba(255,255,255,.25);border-radius:50%;border:.8px solid #eee"></div><div class="a" style="left:109px;top:61px;width:20px;height:1px;background:#ddd;"></div><div class="a" style="left:109px;top:63.5px;width:16px;height:0.8px;background:#999;"></div><div class="a" style="left:39px;top:70.5px;width:22px;height:0.9px;background:#5b9bd5;"></div><div class="a" style="left:35.3px;top:74px;width:108.5px;height:68px;background:#f7f7f7;"></div><div class="a" style="left:39px;top:79.5px;width:62px;height:1.8px;background:#333;"></div><div class="a" style="left:39px;top:85.5px;width:32.4px;height:32.7px;background:linear-gradient(135deg,#5c4a2a,#8a6a3a 40%,#3e5a2a 70%,#2a2018);"></div><div class="a" style="left:73.2px;top:85.5px;width:32.4px;height:32.7px;background:linear-gradient(160deg,#7a5040,#e8d0b8 40%,#f0e0d0 55%,#a04040 85%);"></div><div class="a" style="left:107.9px;top:85.5px;width:32.7px;height:32.7px;background:linear-gradient(160deg,#2a3a44,#6a7a80 35%,#c0a890 50%,#3a4a58 80%);"></div><div class="a" style="left:39px;top:120px;width:100px;height:0.9px;background:#777;"></div><div class="a" style="left:39px;top:122.4px;width:94px;height:0.9px;background:#777;"></div><div class="a" style="left:39px;top:124.8px;width:16px;height:0.9px;background:#777;"></div><div class="a" style="left:147.6px;top:21.8px;width:24px;height:1.2px;background:#444;"></div><div class="a" style="left:147.6px;top:24px;width:48.8px;height:27.4px;background:linear-gradient(90deg,#1a1a1a,#3a3028 30%,#2a2a2a 60%,#403830 80%,#1a1a1a);"></div><div class="a" style="left:148.5px;top:47.5px;width:14px;height:0.8px;background:#bbb;"></div><div class="a" style="left:147.6px;top:55.0px;width:3.5px;height:3.5px;background:#ccc;border:.5px solid #999"></div><div class="a" style="left:152.5px;top:55.0px;width:16px;height:1.1px;background:#3b7ac0;"></div><div class="a" style="left:152.5px;top:57.0px;width:20px;height:0.8px;background:#aaa;"></div><div class="a" style="left:147.6px;top:61.8px;width:3.5px;height:3.5px;background:#ccc;border:.5px solid #999"></div><div class="a" style="left:152.5px;top:61.8px;width:16px;height:1.1px;background:#3b7ac0;"></div><div class="a" style="left:152.5px;top:63.8px;width:20px;height:0.8px;background:#aaa;"></div><div class="a" style="left:147.6px;top:68.6px;width:3.5px;height:3.5px;background:#ccc;border:.5px solid #999"></div><div class="a" style="left:152.5px;top:68.6px;width:16px;height:1.1px;background:#3b7ac0;"></div><div class="a" style="left:152.5px;top:70.6px;width:20px;height:0.8px;background:#aaa;"></div><div class="a" style="left:147.6px;top:75.4px;width:3.5px;height:3.5px;background:#ccc;border:.5px solid #999"></div><div class="a" style="left:152.5px;top:75.4px;width:16px;height:1.1px;background:#3b7ac0;"></div><div class="a" style="left:152.5px;top:77.4px;width:20px;height:0.8px;background:#aaa;"></div><div class="a" style="left:147.6px;top:82.2px;width:3.5px;height:3.5px;background:#ccc;border:.5px solid #999"></div><div class="a" style="left:152.5px;top:82.2px;width:16px;height:1.1px;background:#3b7ac0;"></div><div class="a" style="left:152.5px;top:84.2px;width:20px;height:0.8px;background:#aaa;"></div><div class="a" style="left:147.6px;top:90px;width:25px;height:0.9px;background:#3b7ac0;"></div><div class="a" style="left:147px;top:97.5px;width:50px;height:0.5px;background:#ddd;"></div><div class="a" style="left:147.6px;top:103.5px;width:28px;height:1.2px;background:#444;"></div><div class="a" style="left:147.6px;top:108px;width:3.5px;height:3.5px;background:#ccc;border:.5px solid #999"></div><div class="a" style="left:152.5px;top:108px;width:22px;height:1.1px;background:#3b7ac0;"></div><div class="a" style="left:147.6px;top:114.5px;width:3.5px;height:3.5px;background:#ccc;border:.5px solid #999"></div><div class="a" style="left:152.5px;top:114.5px;width:28px;height:1.1px;background:#3b7ac0;"></div><div class="a" style="left:147.6px;top:121.5px;width:3.5px;height:3.5px;background:#ccc;border:.5px solid #999"></div><div class="a" style="left:152.5px;top:121.5px;width:16px;height:1.1px;background:#3b7ac0;"></div><div class="a" style="left:187px;top:108px;width:9px;height:1px;background:#3b7ac0;"></div><div class="a" style="left:187px;top:115px;width:9px;height:1px;background:#3b7ac0;"></div><div class="a" style="left:189px;top:122px;width:7px;height:1px;background:#555;"></div></div></div></div>
<div class="thumb" style="left:296px;top:461px"><div class="chr"><div class="ts"></div><div class="tb" style="width:30px"></div><div class="nt"></div>
<i style="left:1.8px;background:#fc5753"></i><i style="left:5.2px;background:#fdbc40"></i><i style="left:8.5px;background:#33c748"></i>
<div class="ab"></div><div class="uf"></div>
<div class="a" style="left:16.5px;top:3px;width:18px;height:1px;background:#777"></div>
<div class="a" style="left:2.5px;top:8.3px;width:2px;height:1.2px;background:#888"></div><div class="a" style="left:6.5px;top:8.3px;width:2px;height:1.2px;background:#ccc"></div><div class="a" style="left:10.5px;top:8px;width:2px;height:2px;background:#777;border-radius:50%"></div>
<div class="a" style="left:17px;top:8.3px;width:1px;height:1.2px;background:#4a4"></div><div class="a" style="left:19.5px;top:8.5px;width:6px;height:1px;background:#6b6"></div><div class="a" style="left:26.5px;top:8.5px;width:36px;height:1px;background:#555"></div>
<div class="a" style="left:218px;top:7.8px;width:2.5px;height:2.5px;background:#999;border-radius:50%"></div><div class="a" style="left:222.5px;top:7.8px;width:2.5px;height:2.5px;background:#777"></div>
<div class="a" style="left:222px;top:2.5px;width:6px;height:1px;background:#999"></div></div><div class="ct"><div class="a" style="left:0px;top:0px;width:235px;height:136px;background:#fff;"></div><div class="a" style="left:0px;top:0px;width:28.7px;height:136px;background:#f6f6f6;"></div><div class="a" style="left:28.7px;top:7px;width:206.3px;height:6.6px;background:linear-gradient(#fff,#eef3f8);"></div><div class="a" style="left:28.7px;top:13.6px;width:206.3px;height:0.5px;background:#a7d7f9;"></div><div class="a" style="left:28.7px;top:13.6px;width:0.5px;height:123px;background:#a7d7f9;"></div><svg class="a" style="left:6px;top:3px" width="17" height="17" viewBox="0 0 17 17"><circle cx="8.5" cy="8.5" r="8" fill="#e2e2e2"/><path d="M2 6 L7 3 L9 8 L5 12Z M10 2 L15 6 L12 10Z M9 11 L14 12 L10 16Z M3 13 L6 14 L5 16Z" fill="#a8a8a8"/><circle cx="8.5" cy="8.5" r="8" fill="none" stroke="#aaa" stroke-width=".6"/></svg><div class="a" style="left:5px;top:20.3px;width:19.5px;height:1.4px;background:#707070;"></div><div class="a" style="left:6px;top:23.5px;width:17px;height:0.8px;background:#aaa;"></div><div class="a" style="left:4.4px;top:31.6px;width:4.2px;height:1px;background:#7090d8;"></div><div class="a" style="left:9.2px;top:31.6px;width:3.6px;height:1px;background:#7090d8;"></div><div class="a" style="left:13.4px;top:31.6px;width:2.6px;height:1px;background:#7090d8;"></div><div class="a" style="left:4.4px;top:34.7px;width:3.3px;height:1px;background:#7090d8;"></div><div class="a" style="left:8.3px;top:34.7px;width:3.6px;height:1px;background:#7090d8;"></div><div class="a" style="left:12.5px;top:34.7px;width:5.0px;height:1px;background:#7090d8;"></div><div class="a" style="left:4.4px;top:37.800000000000004px;width:4.8px;height:1px;background:#7090d8;"></div><div class="a" style="left:9.8px;top:37.800000000000004px;width:4.6px;height:1px;background:#7090d8;"></div><div class="a" style="left:4.4px;top:40.900000000000006px;width:10.8px;height:1px;background:#7090d8;"></div><div class="a" style="left:4.4px;top:44.0px;width:5.3px;height:1px;background:#7090d8;"></div><div class="a" style="left:10.3px;top:44.0px;width:3.9px;height:1px;background:#7090d8;"></div><div class="a" style="left:14.9px;top:44.0px;width:5.4px;height:1px;background:#7090d8;"></div><div class="a" style="left:4.4px;top:47.1px;width:8.1px;height:1px;background:#7090d8;"></div><div class="a" style="left:13.1px;top:47.1px;width:4.9px;height:1px;background:#7090d8;"></div><div class="a" style="left:4.4px;top:50.2px;width:4.6px;height:1px;background:#7090d8;"></div><div class="a" style="left:9.6px;top:50.2px;width:4.2px;height:1px;background:#7090d8;"></div><div class="a" style="left:4.4px;top:54.5px;width:8.756685590522917px;height:0.9px;background:#a0a0a0;"></div><div class="a" style="left:6.4px;top:57.9px;width:5.4px;height:1px;background:#7090d8;"></div><div class="a" style="left:12.4px;top:57.9px;width:5.2px;height:1px;background:#7090d8;"></div><div class="a" style="left:6.4px;top:61.0px;width:7.2px;height:1px;background:#7090d8;"></div><div class="a" style="left:14.2px;top:61.0px;width:4.2px;height:1px;background:#7090d8;"></div><div class="a" style="left:6.4px;top:64.1px;width:3.9px;height:1px;background:#7090d8;"></div><div class="a" style="left:10.9px;top:64.1px;width:9.1px;height:1px;background:#7090d8;"></div><div class="a" style="left:6.4px;top:67.2px;width:3.3px;height:1px;background:#7090d8;"></div><div class="a" style="left:10.3px;top:67.2px;width:7.5px;height:1px;background:#7090d8;"></div><div class="a" style="left:6.4px;top:70.3px;width:5.5px;height:1px;background:#7090d8;"></div><div class="a" style="left:12.5px;top:70.3px;width:7.8px;height:1px;background:#7090d8;"></div><div class="a" style="left:4.4px;top:74.6px;width:8.368615993904239px;height:0.9px;background:#a0a0a0;"></div><div class="a" style="left:6.4px;top:78.0px;width:10.6px;height:1px;background:#7090d8;"></div><div class="a" style="left:17.6px;top:78.0px;width:2.7px;height:1px;background:#7090d8;"></div><div class="a" style="left:6.4px;top:81.1px;width:8.2px;height:1px;background:#7090d8;"></div><div class="a" style="left:15.2px;top:81.1px;width:4.1px;height:1px;background:#7090d8;"></div><div class="a" style="left:6.4px;top:84.2px;width:8.3px;height:1px;background:#7090d8;"></div><div class="a" style="left:15.3px;top:84.2px;width:1.8px;height:1px;background:#7090d8;"></div><div class="a" style="left:6.4px;top:87.3px;width:3.5px;height:1px;background:#7090d8;"></div><div class="a" style="left:10.5px;top:87.3px;width:4.0px;height:1px;background:#7090d8;"></div><div class="a" style="left:6.4px;top:90.4px;width:10.0px;height:1px;background:#7090d8;"></div><div class="a" style="left:6.4px;top:93.5px;width:7.4px;height:1px;background:#7090d8;"></div><div class="a" style="left:14.4px;top:93.5px;width:3.1px;height:1px;background:#7090d8;"></div><div class="a" style="left:6.4px;top:96.6px;width:6.3px;height:1px;background:#7090d8;"></div><div class="a" style="left:13.3px;top:96.6px;width:3.0px;height:1px;background:#7090d8;"></div><div class="a" style="left:4.4px;top:100.9px;width:7.452762717373327px;height:0.9px;background:#a0a0a0;"></div><div class="a" style="left:6.4px;top:104.30000000000001px;width:4.9px;height:1px;background:#7090d8;"></div><div class="a" style="left:11.9px;top:104.30000000000001px;width:3.8px;height:1px;background:#7090d8;"></div><div class="a" style="left:6.4px;top:107.4px;width:3.0px;height:1px;background:#7090d8;"></div><div class="a" style="left:10.0px;top:107.4px;width:6.0px;height:1px;background:#7090d8;"></div><div class="a" style="left:6.4px;top:110.50000000000001px;width:8.5px;height:1px;background:#7090d8;"></div><div class="a" style="left:15.5px;top:110.50000000000001px;width:5.5px;height:1px;background:#7090d8;"></div><div class="a" style="left:4.4px;top:115px;width:7.16197867967137px;height:0.9px;background:#a0a0a0;"></div><div class="a" style="left:6.4px;top:118.4px;width:9.2px;height:1px;background:#7090d8;"></div><div class="a" style="left:16.2px;top:118.4px;width:7.2px;height:1px;background:#7090d8;"></div><div class="a" style="left:6.4px;top:121.5px;width:3.8px;height:1px;background:#7090d8;"></div><div class="a" style="left:10.8px;top:121.5px;width:3.5px;height:1px;background:#7090d8;"></div><div class="a" style="left:14.9px;top:121.5px;width:3.5px;height:1px;background:#7090d8;"></div><div class="a" style="left:6.4px;top:124.60000000000001px;width:3.4px;height:1px;background:#7090d8;"></div><div class="a" style="left:10.4px;top:124.60000000000001px;width:4.2px;height:1px;background:#7090d8;"></div><div class="a" style="left:15.2px;top:124.60000000000001px;width:2.6px;height:1px;background:#7090d8;"></div><div class="a" style="left:6.4px;top:127.7px;width:7.9px;height:1px;background:#7090d8;"></div><div class="a" style="left:14.9px;top:127.7px;width:5.0px;height:1px;background:#7090d8;"></div><div class="a" style="left:20.5px;top:127.7px;width:2.6px;height:1px;background:#7090d8;"></div><div class="a" style="left:6.4px;top:130.8px;width:10.9px;height:1px;background:#7090d8;"></div><div class="a" style="left:17.9px;top:130.8px;width:4.9px;height:1px;background:#7090d8;"></div><div class="a" style="left:179px;top:3.2px;width:10px;height:0.9px;background:#999;"></div><div class="a" style="left:191px;top:3.2px;width:3.8px;height:1px;background:#7d98d8;"></div><div class="a" style="left:195.4px;top:3.2px;width:5.1px;height:1px;background:#7d98d8;"></div><div class="a" style="left:201.1px;top:3.2px;width:4.3px;height:1px;background:#7d98d8;"></div><div class="a" style="left:206.0px;top:3.2px;width:10.6px;height:1px;background:#7d98d8;"></div><div class="a" style="left:217.2px;top:3.2px;width:4.2px;height:1px;background:#7d98d8;"></div><div class="a" style="left:222.0px;top:3.2px;width:3.2px;height:1px;background:#7d98d8;"></div><div class="a" style="left:225.8px;top:3.2px;width:6.2px;height:1px;background:#7d98d8;"></div><div class="a" style="left:33px;top:10.4px;width:9px;height:0.9px;background:#777;"></div><div class="a" style="left:44.4px;top:10.4px;width:4px;height:0.9px;background:#6f8fd8;"></div><div class="a" style="left:147.3px;top:10.4px;width:6px;height:0.9px;background:#777;"></div><div class="a" style="left:155px;top:10.4px;width:11px;height:0.9px;background:#6f8fd8;"></div><div class="a" style="left:167.5px;top:10.4px;width:11.5px;height:0.9px;background:#6f8fd8;"></div><div class="a" style="left:181px;top:8.5px;width:51px;height:4px;background:#fff;border:.5px solid #bbb"></div><div class="a" style="left:31.2px;top:17.7px;width:199px;height:15.9px;background:#f8f9fa;border:.5px solid #ddd"></div><div class="a" style="left:35.7px;top:21.6px;width:21px;height:2px;background:#666;"></div><div class="a" style="left:58px;top:21.6px;width:15px;height:2px;background:#5a80d8;"></div><div class="a" style="left:33.7px;top:27.3px;width:8.6px;height:1px;background:#7d98d8;"></div><div class="a" style="left:42.9px;top:27.3px;width:5.9px;height:1px;background:#7d98d8;"></div><div class="a" style="left:49.4px;top:27.3px;width:9.2px;height:1px;background:#8e8e8e;"></div><div class="a" style="left:59.2px;top:27.3px;width:9.2px;height:1px;background:#7d98d8;"></div><div class="a" style="left:69.0px;top:27.3px;width:4.8px;height:1px;background:#8e8e8e;"></div><div class="a" style="left:42.1px;top:30.2px;width:10.9px;height:1px;background:#8e8e8e;"></div><div class="a" style="left:53.6px;top:30.2px;width:9.4px;height:1px;background:#8e8e8e;"></div><div class="a" style="left:63.6px;top:30.2px;width:2.5px;height:1px;background:#7d98d8;"></div><div class="a" style="left:155.2px;top:22.1px;width:1px;height:1px;background:#555;"></div><div class="a" style="left:157.2px;top:22.1px;width:10.105832345461033px;height:0.9px;background:#6f8fd8;"></div><div class="a" style="left:155.2px;top:25.8px;width:1px;height:1px;background:#555;"></div><div class="a" style="left:157.2px;top:25.8px;width:9.13337526012975px;height:0.9px;background:#6f8fd8;"></div><div class="a" style="left:155.2px;top:29.3px;width:1px;height:1px;background:#555;"></div><div class="a" style="left:157.2px;top:29.3px;width:7.173880904448192px;height:0.9px;background:#6f8fd8;"></div><div class="a" style="left:181px;top:22.1px;width:1px;height:1px;background:#555;"></div><div class="a" style="left:183px;top:22.1px;width:7.167622452532386px;height:0.9px;background:#6f8fd8;"></div><div class="a" style="left:181px;top:25.8px;width:1px;height:1px;background:#555;"></div><div class="a" style="left:183px;top:25.8px;width:8.676511234294178px;height:0.9px;background:#6f8fd8;"></div><div class="a" style="left:181px;top:29.3px;width:1px;height:1px;background:#555;"></div><div class="a" style="left:183px;top:29.3px;width:8.555046179606538px;height:0.9px;background:#6f8fd8;"></div><div class="a" style="left:206.3px;top:22.1px;width:1px;height:1px;background:#555;"></div><div class="a" style="left:208.3px;top:22.1px;width:11.15513165020074px;height:0.9px;background:#6f8fd8;"></div><div class="a" style="left:206.3px;top:25.8px;width:1px;height:1px;background:#555;"></div><div class="a" style="left:208.3px;top:25.8px;width:12.739090458048027px;height:0.9px;background:#6f8fd8;"></div><div class="a" style="left:206.3px;top:29.3px;width:1px;height:1px;background:#555;"></div><div class="a" style="left:208.3px;top:29.3px;width:9.68336606660034px;height:0.9px;background:#6f8fd8;"></div><div class="a" style="left:31.2px;top:40.6px;width:109.1px;height:54px;background:#f5fffa;"></div><div class="a" style="left:31.2px;top:36.1px;width:109.1px;height:4.5px;background:#cef2e0;border:.5px solid #a3bfb1"></div><div class="a" style="left:33.5px;top:37.8px;width:36px;height:1.3px;background:#333;"></div><div class="a" style="left:34.2px;top:45.1px;width:10.5px;height:1px;background:#8e8e8e;"></div><div class="a" style="left:45.3px;top:45.1px;width:10.6px;height:1px;background:#8e8e8e;"></div><div class="a" style="left:56.5px;top:45.1px;width:4.8px;height:1px;background:#8e8e8e;"></div><div class="a" style="left:61.9px;top:45.1px;width:4.6px;height:1px;background:#7d98d8;"></div><div class="a" style="left:67.1px;top:45.1px;width:8.0px;height:1px;background:#8e8e8e;"></div><div class="a" style="left:75.7px;top:45.1px;width:9.7px;height:1px;background:#8e8e8e;"></div><div class="a" style="left:86.0px;top:45.1px;width:8.2px;height:1px;background:#8e8e8e;"></div><div class="a" style="left:94.8px;top:45.1px;width:3.7px;height:1px;background:#8e8e8e;"></div><div class="a" style="left:99.1px;top:45.1px;width:10.3px;height:1px;background:#8e8e8e;"></div><div class="a" style="left:110.0px;top:45.1px;width:9.0px;height:1px;background:#8e8e8e;"></div><div class="a" style="left:119.6px;top:45.1px;width:4.4px;height:1px;background:#8e8e8e;"></div><div class="a" style="left:124.6px;top:45.1px;width:5.7px;height:1px;background:#8e8e8e;"></div><div class="a" style="left:130.9px;top:45.1px;width:7.3px;height:1px;background:#8e8e8e;"></div><div class="a" style="left:34.2px;top:48.6px;width:6.2px;height:1px;background:#8e8e8e;"></div><div class="a" style="left:41.0px;top:48.6px;width:8.8px;height:1px;background:#7d98d8;"></div><div class="a" style="left:50.4px;top:48.6px;width:4.0px;height:1px;background:#7d98d8;"></div><div class="a" style="left:55.0px;top:48.6px;width:10.2px;height:1px;background:#8e8e8e;"></div><div class="a" style="left:65.9px;top:48.6px;width:4.2px;height:1px;background:#8e8e8e;"></div><div class="a" style="left:70.6px;top:48.6px;width:10.8px;height:1px;background:#8e8e8e;"></div><div class="a" style="left:82.1px;top:48.6px;width:5.8px;height:1px;background:#8e8e8e;"></div><div class="a" style="left:88.5px;top:48.6px;width:4.0px;height:1px;background:#7d98d8;"></div><div class="a" style="left:93.1px;top:48.6px;width:10.8px;height:1px;background:#8e8e8e;"></div><div class="a" style="left:104.5px;top:48.6px;width:7.2px;height:1px;background:#8e8e8e;"></div><div class="a" style="left:112.3px;top:48.6px;width:6.5px;height:1px;background:#8e8e8e;"></div><div class="a" style="left:119.4px;top:48.6px;width:9.6px;height:1px;background:#8e8e8e;"></div><div class="a" style="left:129.6px;top:48.6px;width:5.0px;height:1px;background:#8e8e8e;"></div><div class="a" style="left:135.2px;top:48.6px;width:3.0px;height:1px;background:#8e8e8e;"></div><div class="a" style="left:34.2px;top:52.1px;width:5.1px;height:1px;background:#8e8e8e;"></div><div class="a" style="left:39.9px;top:52.1px;width:4.0px;height:1px;background:#8e8e8e;"></div><div class="a" style="left:44.5px;top:52.1px;width:5.8px;height:1px;background:#8e8e8e;"></div><div class="a" style="left:51.0px;top:52.1px;width:7.7px;height:1px;background:#8e8e8e;"></div><div class="a" style="left:59.2px;top:52.1px;width:6.4px;height:1px;background:#8e8e8e;"></div><div class="a" style="left:66.2px;top:52.1px;width:7.0px;height:1px;background:#8e8e8e;"></div><div class="a" style="left:73.8px;top:52.1px;width:7.2px;height:1px;background:#7d98d8;"></div><div class="a" style="left:81.6px;top:52.1px;width:6.5px;height:1px;background:#7d98d8;"></div><div class="a" style="left:88.7px;top:52.1px;width:3.0px;height:1px;background:#8e8e8e;"></div><div class="a" style="left:92.3px;top:52.1px;width:4.4px;height:1px;background:#8e8e8e;"></div><div class="a" style="left:97.3px;top:52.1px;width:8.8px;height:1px;background:#8e8e8e;"></div><div class="a" style="left:106.7px;top:52.1px;width:5.6px;height:1px;background:#8e8e8e;"></div><div class="a" style="left:112.9px;top:52.1px;width:7.4px;height:1px;background:#8e8e8e;"></div><div class="a" style="left:121.0px;top:52.1px;width:3.8px;height:1px;background:#8e8e8e;"></div><div class="a" style="left:125.4px;top:52.1px;width:5.0px;height:1px;background:#8e8e8e;"></div><div class="a" style="left:131.0px;top:52.1px;width:7.2px;height:1px;background:#8e8e8e;"></div><div class="a" style="left:34.2px;top:55.6px;width:7.5px;height:1px;background:#8e8e8e;"></div><div class="a" style="left:42.3px;top:55.6px;width:10.3px;height:1px;background:#8e8e8e;"></div><div class="a" style="left:53.2px;top:55.6px;width:7.9px;height:1px;background:#8e8e8e;"></div><div class="a" style="left:61.7px;top:55.6px;width:7.1px;height:1px;background:#8e8e8e;"></div><div class="a" style="left:69.4px;top:55.6px;width:6.6px;height:1px;background:#8e8e8e;"></div><div class="a" style="left:76.6px;top:55.6px;width:6.8px;height:1px;background:#8e8e8e;"></div><div class="a" style="left:84.0px;top:55.6px;width:8.6px;height:1px;background:#8e8e8e;"></div><div class="a" style="left:93.2px;top:55.6px;width:10.5px;height:1px;background:#8e8e8e;"></div><div class="a" style="left:104.4px;top:55.6px;width:7.5px;height:1px;background:#8e8e8e;"></div><div class="a" style="left:112.4px;top:55.6px;width:9.7px;height:1px;background:#7d98d8;"></div><div class="a" style="left:122.8px;top:55.6px;width:4.0px;height:1px;background:#8e8e8e;"></div><div class="a" style="left:127.3px;top:55.6px;width:3.6px;height:1px;background:#8e8e8e;"></div><div class="a" style="left:131.5px;top:55.6px;width:3.6px;height:1px;background:#8e8e8e;"></div><div class="a" style="left:135.7px;top:55.6px;width:2.5px;height:1px;background:#8e8e8e;"></div><div class="a" style="left:34.2px;top:59.1px;width:4.2px;height:1px;background:#8e8e8e;"></div><div class="a" style="left:39.0px;top:59.1px;width:8.3px;height:1px;background:#7d98d8;"></div><div class="a" style="left:47.9px;top:59.1px;width:10.1px;height:1px;background:#8e8e8e;"></div><div class="a" style="left:58.6px;top:59.1px;width:4.8px;height:1px;background:#8e8e8e;"></div><div class="a" style="left:63.9px;top:59.1px;width:6.2px;height:1px;background:#8e8e8e;"></div><div class="a" style="left:70.7px;top:59.1px;width:10.9px;height:1px;background:#8e8e8e;"></div><div class="a" style="left:82.2px;top:59.1px;width:4.3px;height:1px;background:#8e8e8e;"></div><div class="a" style="left:87.1px;top:59.1px;width:7.1px;height:1px;background:#8e8e8e;"></div><div class="a" style="left:94.9px;top:59.1px;width:4.6px;height:1px;background:#8e8e8e;"></div><div class="a" style="left:100.0px;top:59.1px;width:8.8px;height:1px;background:#7d98d8;"></div><div class="a" style="left:109.4px;top:59.1px;width:7.4px;height:1px;background:#8e8e8e;"></div><div class="a" style="left:117.4px;top:59.1px;width:3.1px;height:1px;background:#8e8e8e;"></div><div class="a" style="left:121.2px;top:59.1px;width:8.0px;height:1px;background:#8e8e8e;"></div><div class="a" style="left:129.8px;top:59.1px;width:3.5px;height:1px;background:#8e8e8e;"></div><div class="a" style="left:133.9px;top:59.1px;width:4.3px;height:1px;background:#8e8e8e;"></div><div class="a" style="left:34.2px;top:62.6px;width:3.8px;height:1px;background:#8e8e8e;"></div><div class="a" style="left:38.6px;top:62.6px;width:3.3px;height:1px;background:#8e8e8e;"></div><div class="a" style="left:42.6px;top:62.6px;width:5.2px;height:1px;background:#7d98d8;"></div><div class="a" style="left:48.3px;top:62.6px;width:6.4px;height:1px;background:#8e8e8e;"></div><div class="a" style="left:55.3px;top:62.6px;width:9.6px;height:1px;background:#8e8e8e;"></div><div class="a" style="left:65.4px;top:62.6px;width:4.2px;height:1px;background:#8e8e8e;"></div><div class="a" style="left:70.2px;top:62.6px;width:7.6px;height:1px;background:#8e8e8e;"></div><div class="a" style="left:78.4px;top:62.6px;width:3.7px;height:1px;background:#7d98d8;"></div><div class="a" style="left:82.7px;top:62.6px;width:8.5px;height:1px;background:#8e8e8e;"></div><div class="a" style="left:91.8px;top:62.6px;width:3.6px;height:1px;background:#8e8e8e;"></div><div class="a" style="left:96.0px;top:62.6px;width:8.1px;height:1px;background:#8e8e8e;"></div><div class="a" style="left:104.7px;top:62.6px;width:3.7px;height:1px;background:#8e8e8e;"></div><div class="a" style="left:109.0px;top:62.6px;width:3.5px;height:1px;background:#8e8e8e;"></div><div class="a" style="left:113.1px;top:62.6px;width:6.6px;height:1px;background:#8e8e8e;"></div><div class="a" style="left:120.3px;top:62.6px;width:7.4px;height:1px;background:#8e8e8e;"></div><div class="a" style="left:128.3px;top:62.6px;width:5.1px;height:1px;background:#7d98d8;"></div><div class="a" style="left:134.1px;top:62.6px;width:4.1px;height:1px;background:#8e8e8e;"></div><div class="a" style="left:34.2px;top:66.1px;width:3.9px;height:1px;background:#7d98d8;"></div><div class="a" style="left:38.7px;top:66.1px;width:3.4px;height:1px;background:#7d98d8;"></div><div class="a" style="left:42.7px;top:66.1px;width:5.5px;height:1px;background:#8e8e8e;"></div><div class="a" style="left:48.8px;top:66.1px;width:9.1px;height:1px;background:#8e8e8e;"></div><div class="a" style="left:58.5px;top:66.1px;width:7.0px;height:1px;background:#7d98d8;"></div><div class="a" style="left:66.1px;top:66.1px;width:5.8px;height:1px;background:#7d98d8;"></div><div class="a" style="left:72.4px;top:66.1px;width:5.0px;height:1px;background:#7d98d8;"></div><div class="a" style="left:78.0px;top:66.1px;width:8.9px;height:1px;background:#8e8e8e;"></div><div class="a" style="left:87.5px;top:66.1px;width:4.5px;height:1px;background:#8e8e8e;"></div><div class="a" style="left:92.6px;top:66.1px;width:10.5px;height:1px;background:#7d98d8;"></div><div class="a" style="left:103.7px;top:66.1px;width:9.6px;height:1px;background:#8e8e8e;"></div><div class="a" style="left:113.8px;top:66.1px;width:7.0px;height:1px;background:#8e8e8e;"></div><div class="a" style="left:121.4px;top:66.1px;width:6.1px;height:1px;background:#8e8e8e;"></div><div class="a" style="left:128.1px;top:66.1px;width:8.5px;height:1px;background:#8e8e8e;"></div><div class="a" style="left:34.2px;top:69.6px;width:5.7px;height:1px;background:#8e8e8e;"></div><div class="a" style="left:40.5px;top:69.6px;width:8.7px;height:1px;background:#8e8e8e;"></div><div class="a" style="left:49.8px;top:69.6px;width:6.2px;height:1px;background:#8e8e8e;"></div><div class="a" style="left:56.6px;top:69.6px;width:3.4px;height:1px;background:#7d98d8;"></div><div class="a" style="left:60.7px;top:69.6px;width:3.6px;height:1px;background:#8e8e8e;"></div><div class="a" style="left:64.8px;top:69.6px;width:5.0px;height:1px;background:#7d98d8;"></div><div class="a" style="left:70.5px;top:69.6px;width:3.7px;height:1px;background:#8e8e8e;"></div><div class="a" style="left:74.8px;top:69.6px;width:10.0px;height:1px;background:#8e8e8e;"></div><div class="a" style="left:85.3px;top:69.6px;width:5.3px;height:1px;background:#8e8e8e;"></div><div class="a" style="left:91.2px;top:69.6px;width:5.3px;height:1px;background:#8e8e8e;"></div><div class="a" style="left:97.1px;top:69.6px;width:4.3px;height:1px;background:#8e8e8e;"></div><div class="a" style="left:102.0px;top:69.6px;width:5.1px;height:1px;background:#8e8e8e;"></div><div class="a" style="left:107.7px;top:69.6px;width:10.8px;height:1px;background:#8e8e8e;"></div><div class="a" style="left:119.1px;top:69.6px;width:5.0px;height:1px;background:#8e8e8e;"></div><div class="a" style="left:124.6px;top:69.6px;width:5.5px;height:1px;background:#8e8e8e;"></div><div class="a" style="left:130.7px;top:69.6px;width:3.0px;height:1px;background:#8e8e8e;"></div><div class="a" style="left:134.3px;top:69.6px;width:3.9px;height:1px;background:#8e8e8e;"></div><div class="a" style="left:34.2px;top:73.1px;width:4.6px;height:1px;background:#8e8e8e;"></div><div class="a" style="left:39.4px;top:73.1px;width:3.0px;height:1px;background:#8e8e8e;"></div><div class="a" style="left:43.0px;top:73.1px;width:3.7px;height:1px;background:#8e8e8e;"></div><div class="a" style="left:47.4px;top:73.1px;width:3.3px;height:1px;background:#7d98d8;"></div><div class="a" style="left:51.3px;top:73.1px;width:5.4px;height:1px;background:#8e8e8e;"></div><div class="a" style="left:57.3px;top:73.1px;width:7.7px;height:1px;background:#8e8e8e;"></div><div class="a" style="left:65.6px;top:73.1px;width:9.0px;height:1px;background:#8e8e8e;"></div><div class="a" style="left:75.2px;top:73.1px;width:8.7px;height:1px;background:#8e8e8e;"></div><div class="a" style="left:84.5px;top:73.1px;width:6.1px;height:1px;background:#8e8e8e;"></div><div class="a" style="left:91.3px;top:73.1px;width:10.9px;height:1px;background:#7d98d8;"></div><div class="a" style="left:102.7px;top:73.1px;width:8.8px;height:1px;background:#8e8e8e;"></div><div class="a" style="left:112.1px;top:73.1px;width:3.4px;height:1px;background:#8e8e8e;"></div><div class="a" style="left:116.1px;top:73.1px;width:10.1px;height:1px;background:#8e8e8e;"></div><div class="a" style="left:126.8px;top:73.1px;width:8.9px;height:1px;background:#8e8e8e;"></div><div class="a" style="left:136.3px;top:73.1px;width:1.9px;height:1px;background:#8e8e8e;"></div><div class="a" style="left:34.2px;top:76.7px;width:7.0px;height:1px;background:#8e8e8e;"></div><div class="a" style="left:41.8px;top:76.7px;width:9.4px;height:1px;background:#8e8e8e;"></div><div class="a" style="left:51.9px;top:76.7px;width:7.7px;height:1px;background:#8e8e8e;"></div><div class="a" style="left:60.1px;top:76.7px;width:8.5px;height:1px;background:#8e8e8e;"></div><div class="a" style="left:69.2px;top:76.7px;width:4.8px;height:1px;background:#7d98d8;"></div><div class="a" style="left:74.6px;top:76.7px;width:4.1px;height:1px;background:#8e8e8e;"></div><div class="a" style="left:79.3px;top:76.7px;width:3.8px;height:1px;background:#8e8e8e;"></div><div class="a" style="left:83.8px;top:76.7px;width:7.5px;height:1px;background:#8e8e8e;"></div><div class="a" style="left:91.8px;top:76.7px;width:8.0px;height:1px;background:#8e8e8e;"></div><div class="a" style="left:100.4px;top:76.7px;width:6.9px;height:1px;background:#7d98d8;"></div><div class="a" style="left:107.9px;top:76.7px;width:9.4px;height:1px;background:#8e8e8e;"></div><div class="a" style="left:117.9px;top:76.7px;width:7.0px;height:1px;background:#8e8e8e;"></div><div class="a" style="left:125.5px;top:76.7px;width:8.3px;height:1px;background:#7d98d8;"></div><div class="a" style="left:134.4px;top:76.7px;width:3.8px;height:1px;background:#8e8e8e;"></div><div class="a" style="left:34.2px;top:80.3px;width:3.6px;height:1px;background:#8e8e8e;"></div><div class="a" style="left:38.4px;top:80.3px;width:8.8px;height:1px;background:#7d98d8;"></div><div class="a" style="left:47.8px;top:80.3px;width:8.9px;height:1px;background:#8e8e8e;"></div><div class="a" style="left:57.3px;top:80.3px;width:7.0px;height:1px;background:#8e8e8e;"></div><div class="a" style="left:64.9px;top:80.3px;width:6.8px;height:1px;background:#8e8e8e;"></div><div class="a" style="left:72.3px;top:80.3px;width:9.1px;height:1px;background:#8e8e8e;"></div><div class="a" style="left:82.1px;top:80.3px;width:8.1px;height:1px;background:#7d98d8;"></div><div class="a" style="left:90.8px;top:80.3px;width:4.2px;height:1px;background:#8e8e8e;"></div><div class="a" style="left:95.6px;top:80.3px;width:8.9px;height:1px;background:#8e8e8e;"></div><div class="a" style="left:105.1px;top:80.3px;width:7.5px;height:1px;background:#7d98d8;"></div><div class="a" style="left:113.3px;top:80.3px;width:3.5px;height:1px;background:#8e8e8e;"></div><div class="a" style="left:117.4px;top:80.3px;width:8.4px;height:1px;background:#8e8e8e;"></div><div class="a" style="left:126.3px;top:80.3px;width:8.4px;height:1px;background:#8e8e8e;"></div><div class="a" style="left:135.3px;top:80.3px;width:2.9px;height:1px;background:#8e8e8e;"></div><div class="a" style="left:34.7px;top:83.9px;width:15px;height:0.9px;background:#3a5ab8;"></div><div class="a" style="left:70px;top:87.7px;width:6.7px;height:1px;background:#7d98d8;"></div><div class="a" style="left:77.3px;top:87.7px;width:10.1px;height:1px;background:#7d98d8;"></div><div class="a" style="left:88.1px;top:87.7px;width:10.8px;height:1px;background:#8e8e8e;"></div><div class="a" style="left:99.5px;top:87.7px;width:3.1px;height:1px;background:#7d98d8;"></div><div class="a" style="left:103.2px;top:87.7px;width:9.6px;height:1px;background:#8e8e8e;"></div><div class="a" style="left:113.4px;top:87.7px;width:6.6px;height:1px;background:#7d98d8;"></div><div class="a" style="left:120.6px;top:87.7px;width:4.7px;height:1px;background:#8e8e8e;"></div><div class="a" style="left:125.9px;top:87.7px;width:4.7px;height:1px;background:#8e8e8e;"></div><div class="a" style="left:131.2px;top:87.7px;width:4.1px;height:1px;background:#8e8e8e;"></div><div class="a" style="left:135.9px;top:87.7px;width:2.1px;height:1px;background:#7d98d8;"></div><div class="a" style="left:92.7px;top:91.5px;width:9.6px;height:1px;background:#3a5ab8;"></div><div class="a" style="left:102.9px;top:91.5px;width:10.1px;height:1px;background:#8e8e8e;"></div><div class="a" style="left:113.6px;top:91.5px;width:4.9px;height:1px;background:#8e8e8e;"></div><div class="a" style="left:119.0px;top:91.5px;width:6.9px;height:1px;background:#3a5ab8;"></div><div class="a" style="left:126.5px;top:91.5px;width:3.0px;height:1px;background:#3a5ab8;"></div><div class="a" style="left:130.1px;top:91.5px;width:6.6px;height:1px;background:#3a5ab8;"></div><div class="a" style="left:137.3px;top:91.5px;width:1.4px;height:1px;background:#3a5ab8;"></div><div class="a" style="left:31.2px;top:95.7px;width:109.1px;height:4.1px;background:#cef2e0;border:.5px solid #a3bfb1"></div><div class="a" style="left:33.5px;top:97.2px;width:20px;height:1.3px;background:#333;"></div><div class="a" style="left:31.2px;top:99.8px;width:109.1px;height:36.2px;background:#f5fffa;"></div><div class="a" style="left:35.5px;top:104.3px;width:0.9px;height:0.9px;background:#333;"></div><div class="a" style="left:37.5px;top:104.3px;width:5.5px;height:1px;background:#8e8e8e;"></div><div class="a" style="left:43.6px;top:104.3px;width:3.0px;height:1px;background:#8e8e8e;"></div><div class="a" style="left:47.2px;top:104.3px;width:9.7px;height:1px;background:#7d98d8;"></div><div class="a" style="left:57.6px;top:104.3px;width:10.4px;height:1px;background:#8e8e8e;"></div><div class="a" style="left:68.6px;top:104.3px;width:10.2px;height:1px;background:#8e8e8e;"></div><div class="a" style="left:79.4px;top:104.3px;width:6.0px;height:1px;background:#8e8e8e;"></div><div class="a" style="left:86.0px;top:104.3px;width:11.0px;height:1px;background:#8e8e8e;"></div><div class="a" style="left:97.5px;top:104.3px;width:5.9px;height:1px;background:#8e8e8e;"></div><div class="a" style="left:104.0px;top:104.3px;width:5.2px;height:1px;background:#7d98d8;"></div><div class="a" style="left:109.8px;top:104.3px;width:3.8px;height:1px;background:#8e8e8e;"></div><div class="a" style="left:114.2px;top:104.3px;width:4.3px;height:1px;background:#8e8e8e;"></div><div class="a" style="left:37.5px;top:107.8px;width:5.0px;height:1px;background:#8e8e8e;"></div><div class="a" style="left:43.1px;top:107.8px;width:7.1px;height:1px;background:#7d98d8;"></div><div class="a" style="left:50.8px;top:107.8px;width:6.0px;height:1px;background:#8e8e8e;"></div><div class="a" style="left:57.4px;top:107.8px;width:10.1px;height:1px;background:#8e8e8e;"></div><div class="a" style="left:68.0px;top:107.8px;width:8.0px;height:1px;background:#8e8e8e;"></div><div class="a" style="left:76.7px;top:107.8px;width:10.5px;height:1px;background:#8e8e8e;"></div><div class="a" style="left:87.8px;top:107.8px;width:8.8px;height:1px;background:#7d98d8;"></div><div class="a" style="left:97.2px;top:107.8px;width:8.9px;height:1px;background:#8e8e8e;"></div><div class="a" style="left:106.6px;top:107.8px;width:9.0px;height:1px;background:#8e8e8e;"></div><div class="a" style="left:116.3px;top:107.8px;width:2.2px;height:1px;background:#7d98d8;"></div><div class="a" style="left:37.5px;top:111.2px;width:10.4px;height:1px;background:#7d98d8;"></div><div class="a" style="left:48.5px;top:111.2px;width:6.8px;height:1px;background:#8e8e8e;"></div><div class="a" style="left:55.9px;top:111.2px;width:5.4px;height:1px;background:#8e8e8e;"></div><div class="a" style="left:61.9px;top:111.2px;width:10.8px;height:1px;background:#8e8e8e;"></div><div class="a" style="left:73.3px;top:111.2px;width:8.2px;height:1px;background:#8e8e8e;"></div><div class="a" style="left:82.1px;top:111.2px;width:7.5px;height:1px;background:#8e8e8e;"></div><div class="a" style="left:90.2px;top:111.2px;width:4.3px;height:1px;background:#7d98d8;"></div><div class="a" style="left:95.1px;top:111.2px;width:4.7px;height:1px;background:#8e8e8e;"></div><div class="a" style="left:100.4px;top:111.2px;width:7.0px;height:1px;background:#8e8e8e;"></div><div class="a" style="left:108.0px;top:111.2px;width:10.3px;height:1px;background:#8e8e8e;"></div><div class="a" style="left:35.5px;top:115.2px;width:0.9px;height:0.9px;background:#333;"></div><div class="a" style="left:37.5px;top:115.2px;width:6.6px;height:1px;background:#7d98d8;"></div><div class="a" style="left:44.7px;top:115.2px;width:4.5px;height:1px;background:#7d98d8;"></div><div class="a" style="left:49.8px;top:115.2px;width:5.7px;height:1px;background:#7d98d8;"></div><div class="a" style="left:56.2px;top:115.2px;width:4.9px;height:1px;background:#8e8e8e;"></div><div class="a" style="left:61.7px;top:115.2px;width:7.6px;height:1px;background:#8e8e8e;"></div><div class="a" style="left:69.8px;top:115.2px;width:9.0px;height:1px;background:#8e8e8e;"></div><div class="a" style="left:79.4px;top:115.2px;width:6.3px;height:1px;background:#8e8e8e;"></div><div class="a" style="left:86.4px;top:115.2px;width:6.0px;height:1px;background:#8e8e8e;"></div><div class="a" style="left:93.0px;top:115.2px;width:3.5px;height:1px;background:#8e8e8e;"></div><div class="a" style="left:97.1px;top:115.2px;width:10.7px;height:1px;background:#7d98d8;"></div><div class="a" style="left:108.4px;top:115.2px;width:7.0px;height:1px;background:#8e8e8e;"></div><div class="a" style="left:116.0px;top:115.2px;width:2.5px;height:1px;background:#8e8e8e;"></div><div class="a" style="left:37.5px;top:118.8px;width:5.2px;height:1px;background:#8e8e8e;"></div><div class="a" style="left:43.3px;top:118.8px;width:6.2px;height:1px;background:#8e8e8e;"></div><div class="a" style="left:50.1px;top:118.8px;width:10.6px;height:1px;background:#8e8e8e;"></div><div class="a" style="left:61.3px;top:118.8px;width:10.0px;height:1px;background:#7d98d8;"></div><div class="a" style="left:71.9px;top:118.8px;width:3.3px;height:1px;background:#8e8e8e;"></div><div class="a" style="left:75.7px;top:118.8px;width:10.2px;height:1px;background:#8e8e8e;"></div><div class="a" style="left:86.5px;top:118.8px;width:7.7px;height:1px;background:#7d98d8;"></div><div class="a" style="left:94.8px;top:118.8px;width:6.1px;height:1px;background:#8e8e8e;"></div><div class="a" style="left:101.5px;top:118.8px;width:9.6px;height:1px;background:#8e8e8e;"></div><div class="a" style="left:111.7px;top:118.8px;width:6.8px;height:1px;background:#8e8e8e;"></div><div class="a" style="left:37.5px;top:122.2px;width:3.9px;height:1px;background:#7d98d8;"></div><div class="a" style="left:42.0px;top:122.2px;width:7.2px;height:1px;background:#8e8e8e;"></div><div class="a" style="left:49.8px;top:122.2px;width:10.5px;height:1px;background:#8e8e8e;"></div><div class="a" style="left:60.9px;top:122.2px;width:8.2px;height:1px;background:#8e8e8e;"></div><div class="a" style="left:69.7px;top:122.2px;width:6.7px;height:1px;background:#8e8e8e;"></div><div class="a" style="left:76.9px;top:122.2px;width:3.3px;height:1px;background:#8e8e8e;"></div><div class="a" style="left:80.8px;top:122.2px;width:4.9px;height:1px;background:#8e8e8e;"></div><div class="a" style="left:86.3px;top:122.2px;width:8.2px;height:1px;background:#8e8e8e;"></div><div class="a" style="left:95.1px;top:122.2px;width:4.0px;height:1px;background:#8e8e8e;"></div><div class="a" style="left:99.7px;top:122.2px;width:8.1px;height:1px;background:#8e8e8e;"></div><div class="a" style="left:108.4px;top:122.2px;width:3.9px;height:1px;background:#7d98d8;"></div><div class="a" style="left:112.9px;top:122.2px;width:5.6px;height:1px;background:#8e8e8e;"></div><div class="a" style="left:35.5px;top:126.2px;width:0.9px;height:0.9px;background:#333;"></div><div class="a" style="left:37.5px;top:126.2px;width:6.1px;height:1px;background:#8e8e8e;"></div><div class="a" style="left:44.2px;top:126.2px;width:7.8px;height:1px;background:#7d98d8;"></div><div class="a" style="left:52.6px;top:126.2px;width:5.4px;height:1px;background:#8e8e8e;"></div><div class="a" style="left:58.6px;top:126.2px;width:10.7px;height:1px;background:#8e8e8e;"></div><div class="a" style="left:69.9px;top:126.2px;width:10.1px;height:1px;background:#8e8e8e;"></div><div class="a" style="left:80.6px;top:126.2px;width:4.9px;height:1px;background:#8e8e8e;"></div><div class="a" style="left:86.0px;top:126.2px;width:10.7px;height:1px;background:#8e8e8e;"></div><div class="a" style="left:97.3px;top:126.2px;width:5.5px;height:1px;background:#7d98d8;"></div><div class="a" style="left:103.4px;top:126.2px;width:7.0px;height:1px;background:#8e8e8e;"></div><div class="a" style="left:111.0px;top:126.2px;width:6.4px;height:1px;background:#8e8e8e;"></div><div class="a" style="left:37.5px;top:129.9px;width:8.3px;height:1px;background:#8e8e8e;"></div><div class="a" style="left:46.4px;top:129.9px;width:4.8px;height:1px;background:#7d98d8;"></div><div class="a" style="left:51.9px;top:129.9px;width:5.7px;height:1px;background:#8e8e8e;"></div><div class="a" style="left:58.2px;top:129.9px;width:8.5px;height:1px;background:#7d98d8;"></div><div class="a" style="left:67.2px;top:129.9px;width:9.4px;height:1px;background:#8e8e8e;"></div><div class="a" style="left:77.2px;top:129.9px;width:7.0px;height:1px;background:#7d98d8;"></div><div class="a" style="left:84.8px;top:129.9px;width:10.8px;height:1px;background:#8e8e8e;"></div><div class="a" style="left:96.2px;top:129.9px;width:9.6px;height:1px;background:#8e8e8e;"></div><div class="a" style="left:106.4px;top:129.9px;width:4.8px;height:1px;background:#8e8e8e;"></div><div class="a" style="left:111.7px;top:129.9px;width:5.4px;height:1px;background:#8e8e8e;"></div><div class="a" style="left:37.5px;top:133.5px;width:7.0px;height:1px;background:#7d98d8;"></div><div class="a" style="left:45.1px;top:133.5px;width:4.8px;height:1px;background:#8e8e8e;"></div><div class="a" style="left:50.5px;top:133.5px;width:8.3px;height:1px;background:#8e8e8e;"></div><div class="a" style="left:59.4px;top:133.5px;width:4.2px;height:1px;background:#8e8e8e;"></div><div class="a" style="left:64.1px;top:133.5px;width:4.7px;height:1px;background:#8e8e8e;"></div><div class="a" style="left:69.4px;top:133.5px;width:4.1px;height:1px;background:#7d98d8;"></div><div class="a" style="left:74.2px;top:133.5px;width:3.5px;height:1px;background:#8e8e8e;"></div><div class="a" style="left:78.3px;top:133.5px;width:10.2px;height:1px;background:#8e8e8e;"></div><div class="a" style="left:89.1px;top:133.5px;width:8.9px;height:1px;background:#8e8e8e;"></div><div class="a" style="left:98.5px;top:133.5px;width:10.5px;height:1px;background:#8e8e8e;"></div><div class="a" style="left:109.6px;top:133.5px;width:4.5px;height:1px;background:#8e8e8e;"></div><div class="a" style="left:114.7px;top:133.5px;width:3.8px;height:1px;background:#7d98d8;"></div><div class="a" style="left:120.5px;top:102.1px;width:19.3px;height:13.4px;background:linear-gradient(#3d7ad0,#8ab4e0 40%,#c0c0b8 60%,#7a7a6a);"></div><div class="a" style="left:120.5px;top:117.5px;width:8.3px;height:1px;background:#666;"></div><div class="a" style="left:129.4px;top:117.5px;width:6.0px;height:1px;background:#666;"></div><div class="a" style="left:136.0px;top:117.5px;width:3.5px;height:1px;background:#666;"></div><div class="a" style="left:120.5px;top:120.5px;width:5.2px;height:1px;background:#666;"></div><div class="a" style="left:126.3px;top:120.5px;width:10.6px;height:1px;background:#666;"></div><div class="a" style="left:120.5px;top:123.5px;width:10.7px;height:1px;background:#7d98d8;"></div><div class="a" style="left:131.8px;top:123.5px;width:5.9px;height:1px;background:#8e8e8e;"></div><div class="a" style="left:138.3px;top:123.5px;width:1.2px;height:1px;background:#8e8e8e;"></div><div class="a" style="left:143.3px;top:40.6px;width:86.3px;height:95.4px;background:#f5faff;"></div><div class="a" style="left:143.3px;top:36.1px;width:86.3px;height:4.5px;background:#cedff2;border:.5px solid #a3b0bf"></div><div class="a" style="left:145.3px;top:37.8px;width:16px;height:1.3px;background:#333;"></div><div class="a" style="left:147.3px;top:45.0px;width:3.4px;height:1px;background:#8e8e8e;"></div><div class="a" style="left:151.3px;top:45.0px;width:6.0px;height:1px;background:#8e8e8e;"></div><div class="a" style="left:157.9px;top:45.0px;width:4.5px;height:1px;background:#8e8e8e;"></div><div class="a" style="left:163.0px;top:45.0px;width:10.2px;height:1px;background:#7d98d8;"></div><div class="a" style="left:173.8px;top:45.0px;width:6.3px;height:1px;background:#8e8e8e;"></div><div class="a" style="left:180.7px;top:45.0px;width:9.1px;height:1px;background:#7d98d8;"></div><div class="a" style="left:190.4px;top:45.0px;width:3.3px;height:1px;background:#7d98d8;"></div><div class="a" style="left:194.3px;top:45.0px;width:10.4px;height:1px;background:#7d98d8;"></div><div class="a" style="left:205.3px;top:45.0px;width:6.0px;height:1px;background:#8e8e8e;"></div><div class="a" style="left:147.3px;top:48.5px;width:5.7px;height:1px;background:#7d98d8;"></div><div class="a" style="left:153.6px;top:48.5px;width:10.7px;height:1px;background:#8e8e8e;"></div><div class="a" style="left:164.9px;top:48.5px;width:5.1px;height:1px;background:#8e8e8e;"></div><div class="a" style="left:170.6px;top:48.5px;width:5.5px;height:1px;background:#7d98d8;"></div><div class="a" style="left:176.7px;top:48.5px;width:3.0px;height:1px;background:#8e8e8e;"></div><div class="a" style="left:180.3px;top:48.5px;width:10.3px;height:1px;background:#8e8e8e;"></div><div class="a" style="left:191.3px;top:48.5px;width:10.5px;height:1px;background:#7d98d8;"></div><div class="a" style="left:202.4px;top:48.5px;width:4.9px;height:1px;background:#8e8e8e;"></div><div class="a" style="left:207.9px;top:48.5px;width:3.4px;height:1px;background:#8e8e8e;"></div><div class="a" style="left:147.3px;top:52px;width:6.1px;height:1px;background:#7d98d8;"></div><div class="a" style="left:154.0px;top:52px;width:6.4px;height:1px;background:#8e8e8e;"></div><div class="a" style="left:161.0px;top:52px;width:10.4px;height:1px;background:#7d98d8;"></div><div class="a" style="left:172.1px;top:52px;width:9.4px;height:1px;background:#8e8e8e;"></div><div class="a" style="left:182.1px;top:52px;width:9.6px;height:1px;background:#8e8e8e;"></div><div class="a" style="left:192.3px;top:52px;width:7.9px;height:1px;background:#8e8e8e;"></div><div class="a" style="left:200.7px;top:52px;width:5.6px;height:1px;background:#8e8e8e;"></div><div class="a" style="left:206.9px;top:52px;width:4.4px;height:1px;background:#7d98d8;"></div><div class="a" style="left:147.3px;top:55.8px;width:4.6px;height:1px;background:#8e8e8e;"></div><div class="a" style="left:152.5px;top:55.8px;width:5.0px;height:1px;background:#7d98d8;"></div><div class="a" style="left:158.1px;top:55.8px;width:3.3px;height:1px;background:#8e8e8e;"></div><div class="a" style="left:161.9px;top:55.8px;width:5.6px;height:1px;background:#8e8e8e;"></div><div class="a" style="left:168.1px;top:55.8px;width:10.1px;height:1px;background:#8e8e8e;"></div><div class="a" style="left:178.8px;top:55.8px;width:5.1px;height:1px;background:#7d98d8;"></div><div class="a" style="left:184.5px;top:55.8px;width:3.8px;height:1px;background:#8e8e8e;"></div><div class="a" style="left:188.9px;top:55.8px;width:8.7px;height:1px;background:#8e8e8e;"></div><div class="a" style="left:198.2px;top:55.8px;width:4.9px;height:1px;background:#8e8e8e;"></div><div class="a" style="left:203.6px;top:55.8px;width:7.7px;height:1px;background:#8e8e8e;"></div><div class="a" style="left:147.3px;top:59.4px;width:9.0px;height:1px;background:#8e8e8e;"></div><div class="a" style="left:156.9px;top:59.4px;width:8.3px;height:1px;background:#7d98d8;"></div><div class="a" style="left:165.8px;top:59.4px;width:9.7px;height:1px;background:#7d98d8;"></div><div class="a" style="left:176.1px;top:59.4px;width:7.5px;height:1px;background:#8e8e8e;"></div><div class="a" style="left:184.3px;top:59.4px;width:8.9px;height:1px;background:#7d98d8;"></div><div class="a" style="left:193.8px;top:59.4px;width:5.0px;height:1px;background:#7d98d8;"></div><div class="a" style="left:199.3px;top:59.4px;width:4.2px;height:1px;background:#8e8e8e;"></div><div class="a" style="left:204.2px;top:59.4px;width:7.1px;height:1px;background:#8e8e8e;"></div><div class="a" style="left:147.3px;top:63.2px;width:6.2px;height:1px;background:#8e8e8e;"></div><div class="a" style="left:154.1px;top:63.2px;width:7.1px;height:1px;background:#7d98d8;"></div><div class="a" style="left:161.7px;top:63.2px;width:9.5px;height:1px;background:#8e8e8e;"></div><div class="a" style="left:171.8px;top:63.2px;width:10.9px;height:1px;background:#7d98d8;"></div><div class="a" style="left:183.3px;top:63.2px;width:6.8px;height:1px;background:#8e8e8e;"></div><div class="a" style="left:190.7px;top:63.2px;width:9.7px;height:1px;background:#8e8e8e;"></div><div class="a" style="left:201.0px;top:63.2px;width:3.3px;height:1px;background:#7d98d8;"></div><div class="a" style="left:205.0px;top:63.2px;width:4.0px;height:1px;background:#7d98d8;"></div><div class="a" style="left:209.5px;top:63.2px;width:1.8px;height:1px;background:#8e8e8e;"></div><div class="a" style="left:147.3px;top:66.9px;width:10.4px;height:1px;background:#8e8e8e;"></div><div class="a" style="left:158.3px;top:66.9px;width:9.9px;height:1px;background:#8e8e8e;"></div><div class="a" style="left:168.9px;top:66.9px;width:5.1px;height:1px;background:#8e8e8e;"></div><div class="a" style="left:174.5px;top:66.9px;width:10.6px;height:1px;background:#7d98d8;"></div><div class="a" style="left:185.7px;top:66.9px;width:7.8px;height:1px;background:#8e8e8e;"></div><div class="a" style="left:194.1px;top:66.9px;width:4.7px;height:1px;background:#8e8e8e;"></div><div class="a" style="left:199.4px;top:66.9px;width:4.1px;height:1px;background:#7d98d8;"></div><div class="a" style="left:204.2px;top:66.9px;width:5.0px;height:1px;background:#8e8e8e;"></div><div class="a" style="left:209.8px;top:66.9px;width:1.5px;height:1px;background:#7d98d8;"></div><div class="a" style="left:147.3px;top:70.7px;width:3.1px;height:1px;background:#8e8e8e;"></div><div class="a" style="left:151.0px;top:70.7px;width:8.4px;height:1px;background:#7d98d8;"></div><div class="a" style="left:160.0px;top:70.7px;width:5.5px;height:1px;background:#7d98d8;"></div><div class="a" style="left:166.1px;top:70.7px;width:9.4px;height:1px;background:#8e8e8e;"></div><div class="a" style="left:176.1px;top:70.7px;width:3.5px;height:1px;background:#7d98d8;"></div><div class="a" style="left:180.2px;top:70.7px;width:6.2px;height:1px;background:#8e8e8e;"></div><div class="a" style="left:186.9px;top:70.7px;width:8.1px;height:1px;background:#7d98d8;"></div><div class="a" style="left:195.7px;top:70.7px;width:4.3px;height:1px;background:#8e8e8e;"></div><div class="a" style="left:200.6px;top:70.7px;width:6.3px;height:1px;background:#7d98d8;"></div><div class="a" style="left:207.4px;top:70.7px;width:5.5px;height:1px;background:#8e8e8e;"></div><div class="a" style="left:213.5px;top:70.7px;width:5.5px;height:1px;background:#8e8e8e;"></div><div class="a" style="left:219.6px;top:70.7px;width:5.9px;height:1px;background:#8e8e8e;"></div><div class="a" style="left:226.1px;top:70.7px;width:1.2px;height:1px;background:#8e8e8e;"></div><div class="a" style="left:147.3px;top:74.3px;width:5.9px;height:1px;background:#7d98d8;"></div><div class="a" style="left:153.8px;top:74.3px;width:8.8px;height:1px;background:#7d98d8;"></div><div class="a" style="left:163.2px;top:74.3px;width:3.0px;height:1px;background:#8e8e8e;"></div><div class="a" style="left:166.9px;top:74.3px;width:6.4px;height:1px;background:#8e8e8e;"></div><div class="a" style="left:173.9px;top:74.3px;width:6.2px;height:1px;background:#8e8e8e;"></div><div class="a" style="left:180.7px;top:74.3px;width:6.7px;height:1px;background:#7d98d8;"></div><div class="a" style="left:188.0px;top:74.3px;width:3.1px;height:1px;background:#8e8e8e;"></div><div class="a" style="left:191.7px;top:74.3px;width:8.1px;height:1px;background:#8e8e8e;"></div><div class="a" style="left:200.5px;top:74.3px;width:3.7px;height:1px;background:#8e8e8e;"></div><div class="a" style="left:204.8px;top:74.3px;width:6.0px;height:1px;background:#8e8e8e;"></div><div class="a" style="left:211.3px;top:74.3px;width:4.2px;height:1px;background:#7d98d8;"></div><div class="a" style="left:216.1px;top:74.3px;width:7.2px;height:1px;background:#8e8e8e;"></div><div class="a" style="left:223.9px;top:74.3px;width:3.4px;height:1px;background:#8e8e8e;"></div><div class="a" style="left:147.3px;top:78px;width:9.4px;height:1px;background:#8e8e8e;"></div><div class="a" style="left:157.3px;top:78px;width:4.6px;height:1px;background:#7d98d8;"></div><div class="a" style="left:162.5px;top:78px;width:10.5px;height:1px;background:#8e8e8e;"></div><div class="a" style="left:173.7px;top:78px;width:6.9px;height:1px;background:#7d98d8;"></div><div class="a" style="left:181.1px;top:78px;width:10.4px;height:1px;background:#8e8e8e;"></div><div class="a" style="left:192.1px;top:78px;width:10.2px;height:1px;background:#8e8e8e;"></div><div class="a" style="left:203.0px;top:78px;width:9.6px;height:1px;background:#7d98d8;"></div><div class="a" style="left:213.2px;top:78px;width:9.3px;height:1px;background:#7d98d8;"></div><div class="a" style="left:223.0px;top:78px;width:4.3px;height:1px;background:#8e8e8e;"></div><div class="a" style="left:147.3px;top:81.6px;width:9.6px;height:1px;background:#7d98d8;"></div><div class="a" style="left:157.5px;top:81.6px;width:4.7px;height:1px;background:#8e8e8e;"></div><div class="a" style="left:162.9px;top:81.6px;width:7.1px;height:1px;background:#8e8e8e;"></div><div class="a" style="left:170.6px;top:81.6px;width:4.0px;height:1px;background:#7d98d8;"></div><div class="a" style="left:175.2px;top:81.6px;width:8.8px;height:1px;background:#8e8e8e;"></div><div class="a" style="left:184.6px;top:81.6px;width:3.3px;height:1px;background:#8e8e8e;"></div><div class="a" style="left:188.5px;top:81.6px;width:9.1px;height:1px;background:#7d98d8;"></div><div class="a" style="left:198.2px;top:81.6px;width:9.7px;height:1px;background:#7d98d8;"></div><div class="a" style="left:208.5px;top:81.6px;width:7.8px;height:1px;background:#8e8e8e;"></div><div class="a" style="left:216.9px;top:81.6px;width:8.0px;height:1px;background:#7d98d8;"></div><div class="a" style="left:225.5px;top:81.6px;width:1.8px;height:1px;background:#8e8e8e;"></div><svg class="a" style="left:212.7px;top:43px" width="16.4" height="24.9" viewBox="0 0 16.4 24.9"><rect width="16.4" height="24.9" fill="#cfc6b8"/><path d="M0 24.9 Q2 17 8 16.5 Q14 17 16.4 24.9Z" fill="#f4f2ee"/><ellipse cx="8.5" cy="10" rx="4.6" ry="6" fill="#c08a70"/><path d="M3.8 8 Q4 3 8.5 3 Q13 3 13.2 8 Q11 5.5 8.5 5.8 Q6 5.5 3.8 8Z" fill="#2a221c"/><path d="M6 9.5h1.6M9.4 9.5h1.6" stroke="#3a2a22" stroke-width=".6"/></svg><div class="a" style="left:213px;top:69.9px;width:15px;height:0.9px;background:#555;"></div><div class="a" style="left:213px;top:72.8px;width:7px;height:0.9px;background:#555;"></div><div class="a" style="left:143.8px;top:85.7px;width:6.4px;height:1px;background:#8e8e8e;"></div><div class="a" style="left:150.8px;top:85.7px;width:6.6px;height:1px;background:#3a5ab8;"></div><div class="a" style="left:158.0px;top:85.7px;width:3.2px;height:1px;background:#8e8e8e;"></div><div class="a" style="left:161.8px;top:85.7px;width:6.9px;height:1px;background:#3a5ab8;"></div><div class="a" style="left:169.3px;top:85.7px;width:9.1px;height:1px;background:#8e8e8e;"></div><div class="a" style="left:179.0px;top:85.7px;width:6.7px;height:1px;background:#3a5ab8;"></div><div class="a" style="left:186.3px;top:85.7px;width:6.8px;height:1px;background:#3a5ab8;"></div><div class="a" style="left:193.6px;top:85.7px;width:4.0px;height:1px;background:#3a5ab8;"></div><div class="a" style="left:143.8px;top:89.5px;width:3.7px;height:1px;background:#3a5ab8;"></div><div class="a" style="left:148.1px;top:89.5px;width:7.1px;height:1px;background:#3a5ab8;"></div><div class="a" style="left:155.8px;top:89.5px;width:8.1px;height:1px;background:#3a5ab8;"></div><div class="a" style="left:164.5px;top:89.5px;width:8.9px;height:1px;background:#8e8e8e;"></div><div class="a" style="left:174.0px;top:89.5px;width:7.1px;height:1px;background:#3a5ab8;"></div><div class="a" style="left:181.7px;top:89.5px;width:7.0px;height:1px;background:#3a5ab8;"></div><div class="a" style="left:189.3px;top:89.5px;width:10.6px;height:1px;background:#3a5ab8;"></div><div class="a" style="left:200.5px;top:89.5px;width:7.3px;height:1px;background:#8e8e8e;"></div><div class="a" style="left:143.3px;top:93.5px;width:86.3px;height:4.3px;background:#cedff2;border:.5px solid #a3b0bf"></div><div class="a" style="left:145.3px;top:95px;width:16px;height:1.3px;background:#333;"></div><div class="a" style="left:143.8px;top:102.6px;width:8.9px;height:1px;background:#8e8e8e;"></div><div class="a" style="left:153.3px;top:102.6px;width:4.5px;height:1px;background:#8e8e8e;"></div><div class="a" style="left:158.4px;top:102.6px;width:6.9px;height:1px;background:#8e8e8e;"></div><div class="a" style="left:165.9px;top:102.6px;width:10.3px;height:1px;background:#3a5ab8;"></div><div class="a" style="left:176.9px;top:102.6px;width:6.9px;height:1px;background:#8e8e8e;"></div><div class="a" style="left:147.3px;top:107.3px;width:3.5px;height:1px;background:#8e8e8e;"></div><div class="a" style="left:151.4px;top:107.3px;width:9.0px;height:1px;background:#7d98d8;"></div><div class="a" style="left:161.1px;top:107.3px;width:10.2px;height:1px;background:#7d98d8;"></div><div class="a" style="left:171.8px;top:107.3px;width:9.5px;height:1px;background:#7d98d8;"></div><div class="a" style="left:182.0px;top:107.3px;width:7.0px;height:1px;background:#8e8e8e;"></div><div class="a" style="left:189.6px;top:107.3px;width:4.7px;height:1px;background:#7d98d8;"></div><div class="a" style="left:194.9px;top:107.3px;width:7.0px;height:1px;background:#8e8e8e;"></div><div class="a" style="left:202.5px;top:107.3px;width:3.3px;height:1px;background:#7d98d8;"></div><div class="a" style="left:206.4px;top:107.3px;width:3.9px;height:1px;background:#8e8e8e;"></div><div class="a" style="left:147.3px;top:110.8px;width:8.4px;height:1px;background:#8e8e8e;"></div><div class="a" style="left:156.3px;top:110.8px;width:4.3px;height:1px;background:#8e8e8e;"></div><div class="a" style="left:161.3px;top:110.8px;width:3.9px;height:1px;background:#8e8e8e;"></div><div class="a" style="left:165.8px;top:110.8px;width:8.1px;height:1px;background:#8e8e8e;"></div><div class="a" style="left:174.5px;top:110.8px;width:10.0px;height:1px;background:#8e8e8e;"></div><div class="a" style="left:185.1px;top:110.8px;width:7.6px;height:1px;background:#8e8e8e;"></div><div class="a" style="left:193.3px;top:110.8px;width:3.8px;height:1px;background:#8e8e8e;"></div><div class="a" style="left:197.8px;top:110.8px;width:8.0px;height:1px;background:#8e8e8e;"></div><div class="a" style="left:206.4px;top:110.8px;width:3.9px;height:1px;background:#7d98d8;"></div><div class="a" style="left:147.3px;top:114.7px;width:10.9px;height:1px;background:#8e8e8e;"></div><div class="a" style="left:158.8px;top:114.7px;width:5.9px;height:1px;background:#8e8e8e;"></div><div class="a" style="left:165.3px;top:114.7px;width:6.5px;height:1px;background:#7d98d8;"></div><div class="a" style="left:172.4px;top:114.7px;width:8.9px;height:1px;background:#7d98d8;"></div><div class="a" style="left:182.0px;top:114.7px;width:9.6px;height:1px;background:#7d98d8;"></div><div class="a" style="left:192.2px;top:114.7px;width:8.1px;height:1px;background:#8e8e8e;"></div><div class="a" style="left:200.9px;top:114.7px;width:7.7px;height:1px;background:#8e8e8e;"></div><div class="a" style="left:209.2px;top:114.7px;width:1.1px;height:1px;background:#7d98d8;"></div><div class="a" style="left:147.3px;top:118.2px;width:3.3px;height:1px;background:#7d98d8;"></div><div class="a" style="left:151.2px;top:118.2px;width:7.9px;height:1px;background:#8e8e8e;"></div><div class="a" style="left:159.7px;top:118.2px;width:7.1px;height:1px;background:#8e8e8e;"></div><div class="a" style="left:167.4px;top:118.2px;width:4.1px;height:1px;background:#7d98d8;"></div><div class="a" style="left:172.1px;top:118.2px;width:8.2px;height:1px;background:#7d98d8;"></div><div class="a" style="left:180.9px;top:118.2px;width:3.0px;height:1px;background:#8e8e8e;"></div><div class="a" style="left:184.5px;top:118.2px;width:3.9px;height:1px;background:#8e8e8e;"></div><div class="a" style="left:189.0px;top:118.2px;width:4.8px;height:1px;background:#8e8e8e;"></div><div class="a" style="left:194.3px;top:118.2px;width:7.7px;height:1px;background:#7d98d8;"></div><div class="a" style="left:202.7px;top:118.2px;width:7.6px;height:1px;background:#8e8e8e;"></div><div class="a" style="left:147.3px;top:121.7px;width:4.1px;height:1px;background:#8e8e8e;"></div><div class="a" style="left:152.0px;top:121.7px;width:4.9px;height:1px;background:#7d98d8;"></div><div class="a" style="left:157.5px;top:121.7px;width:3.8px;height:1px;background:#8e8e8e;"></div><div class="a" style="left:161.9px;top:121.7px;width:10.0px;height:1px;background:#8e8e8e;"></div><div class="a" style="left:172.5px;top:121.7px;width:6.2px;height:1px;background:#7d98d8;"></div><div class="a" style="left:179.3px;top:121.7px;width:3.1px;height:1px;background:#8e8e8e;"></div><div class="a" style="left:183.0px;top:121.7px;width:7.5px;height:1px;background:#8e8e8e;"></div><div class="a" style="left:191.1px;top:121.7px;width:8.2px;height:1px;background:#8e8e8e;"></div><div class="a" style="left:199.8px;top:121.7px;width:10.5px;height:1px;background:#8e8e8e;"></div><div class="a" style="left:147.3px;top:125.4px;width:5.0px;height:1px;background:#8e8e8e;"></div><div class="a" style="left:152.9px;top:125.4px;width:3.4px;height:1px;background:#8e8e8e;"></div><div class="a" style="left:156.8px;top:125.4px;width:6.2px;height:1px;background:#7d98d8;"></div><div class="a" style="left:163.7px;top:125.4px;width:3.5px;height:1px;background:#8e8e8e;"></div><div class="a" style="left:167.8px;top:125.4px;width:3.1px;height:1px;background:#8e8e8e;"></div><div class="a" style="left:171.5px;top:125.4px;width:10.5px;height:1px;background:#7d98d8;"></div><div class="a" style="left:182.6px;top:125.4px;width:4.6px;height:1px;background:#8e8e8e;"></div><div class="a" style="left:187.8px;top:125.4px;width:7.1px;height:1px;background:#8e8e8e;"></div><div class="a" style="left:195.4px;top:125.4px;width:9.5px;height:1px;background:#7d98d8;"></div><div class="a" style="left:205.5px;top:125.4px;width:4.8px;height:1px;background:#7d98d8;"></div><div class="a" style="left:147.3px;top:129.1px;width:3.4px;height:1px;background:#8e8e8e;"></div><div class="a" style="left:151.3px;top:129.1px;width:9.3px;height:1px;background:#8e8e8e;"></div><div class="a" style="left:161.2px;top:129.1px;width:3.1px;height:1px;background:#8e8e8e;"></div><div class="a" style="left:164.8px;top:129.1px;width:9.0px;height:1px;background:#8e8e8e;"></div><div class="a" style="left:174.4px;top:129.1px;width:8.9px;height:1px;background:#8e8e8e;"></div><div class="a" style="left:183.9px;top:129.1px;width:4.8px;height:1px;background:#7d98d8;"></div><div class="a" style="left:189.3px;top:129.1px;width:4.9px;height:1px;background:#7d98d8;"></div><div class="a" style="left:194.8px;top:129.1px;width:5.7px;height:1px;background:#8e8e8e;"></div><div class="a" style="left:201.0px;top:129.1px;width:8.6px;height:1px;background:#8e8e8e;"></div><div class="a" style="left:147.3px;top:132.8px;width:8.7px;height:1px;background:#7d98d8;"></div><div class="a" style="left:156.6px;top:132.8px;width:7.4px;height:1px;background:#8e8e8e;"></div><div class="a" style="left:164.6px;top:132.8px;width:9.3px;height:1px;background:#8e8e8e;"></div><div class="a" style="left:174.5px;top:132.8px;width:5.1px;height:1px;background:#8e8e8e;"></div><div class="a" style="left:180.3px;top:132.8px;width:10.7px;height:1px;background:#7d98d8;"></div><div class="a" style="left:191.6px;top:132.8px;width:10.0px;height:1px;background:#7d98d8;"></div><div class="a" style="left:202.2px;top:132.8px;width:5.1px;height:1px;background:#7d98d8;"></div><div class="a" style="left:207.9px;top:132.8px;width:2.4px;height:1px;background:#8e8e8e;"></div><div class="a" style="left:212.8px;top:105.6px;width:16.3px;height:24.3px;background:linear-gradient(135deg,#d06a20,#7a3a18 35%,#5a3020 55%,#c87030 80%,#e09040);"></div></div></div>
<div class="thumb" style="left:556px;top:461px"><div class="chr"><div class="ts"></div><div class="tb" style="width:30px"></div><div class="nt"></div>
<i style="left:1.8px;background:#fc5753"></i><i style="left:5.2px;background:#fdbc40"></i><i style="left:8.5px;background:#33c748"></i>
<div class="ab"></div><div class="uf"></div>
<div class="a" style="left:16.5px;top:3px;width:18px;height:1px;background:#777"></div>
<div class="a" style="left:2.5px;top:8.3px;width:2px;height:1.2px;background:#888"></div><div class="a" style="left:6.5px;top:8.3px;width:2px;height:1.2px;background:#ccc"></div><div class="a" style="left:10.5px;top:8px;width:2px;height:2px;background:#777;border-radius:50%"></div>
<div class="a" style="left:17px;top:8.3px;width:1px;height:1.2px;background:#4a4"></div><div class="a" style="left:19.5px;top:8.5px;width:6px;height:1px;background:#6b6"></div><div class="a" style="left:26.5px;top:8.5px;width:20px;height:1px;background:#555"></div>
<div class="a" style="left:218px;top:7.8px;width:2.5px;height:2.5px;background:#999;border-radius:50%"></div><div class="a" style="left:222.5px;top:7.8px;width:2.5px;height:2.5px;background:#777"></div>
<div class="a" style="left:222px;top:2.5px;width:6px;height:1px;background:#999"></div></div><div class="ct"><div class="a" style="left:0px;top:0px;width:235px;height:136px;background:#fff;"></div><div class="a" style="left:185px;top:5.2px;width:5px;height:0.9px;background:#999;"></div><div class="a" style="left:193px;top:5.2px;width:7px;height:0.9px;background:#999;"></div><div class="a" style="left:203px;top:5.2px;width:8px;height:0.9px;background:#999;"></div><div class="a" style="left:213px;top:4px;width:3px;height:3px;background:#888;opacity:.5"></div><div class="a" style="left:219px;top:4px;width:3.5px;height:3.5px;background:#666;border-radius:50%;opacity:.8"></div><div class="a" style="left:224.5px;top:3px;width:5px;height:5px;background:radial-gradient(#2a7a3a 20%,#b04030 60%);border-radius:50%"></div><div class="a" style="left:94.5px;top:31px;font:15.5px/15.5px 'Liberation Sans',sans-serif;letter-spacing:-.6px;white-space:nowrap"><span style="color:#4285f4">G</span><span style="color:#ea4335">o</span><span style="color:#fbbc05">o</span><span style="color:#4285f4">g</span><span style="color:#34a853">l</span><span style="color:#ea4335">e</span></div><div class="a" style="left:71px;top:52.8px;width:95.4px;height:6.8px;background:#fff;border:.6px solid #e2e2e2;box-shadow:0 .5px 1px rgba(0,0,0,.08)"></div><div class="a" style="left:160.5px;top:54.5px;width:1.5px;height:3px;background:#4285f4;"></div><div class="a" style="left:95px;top:65.3px;width:20px;height:5.1px;background:#f2f2f2;border:.5px solid #e3e3e3"></div><div class="a" style="left:117px;top:65.3px;width:24px;height:5.1px;background:#f2f2f2;border:.5px solid #e3e3e3"></div><div class="a" style="left:99px;top:67.5px;width:12px;height:0.7px;background:#777;"></div><div class="a" style="left:121px;top:67.5px;width:16px;height:0.7px;background:#777;"></div><div class="a" style="left:0px;top:128.6px;width:235px;height:8px;background:#f2f2f2;border-top:.5px solid #e4e4e4"></div></div></div>
<div class="a" style="left:0;top:604px;width:828px;height:3px;background:#e6e6e6;border-bottom:1px solid #f2f2f2"></div>
<!--/THUMBS-->
    <div class="cap" style="left:35px;top:384px">Today, 2:06 PM</div>
    <div class="cap" style="left:296px;top:384px">Today, 2:05 PM</div>
    <div class="cap" style="left:556px;top:384px">Today, 2:04 PM</div>
  </div>
</div>
</body></html>
